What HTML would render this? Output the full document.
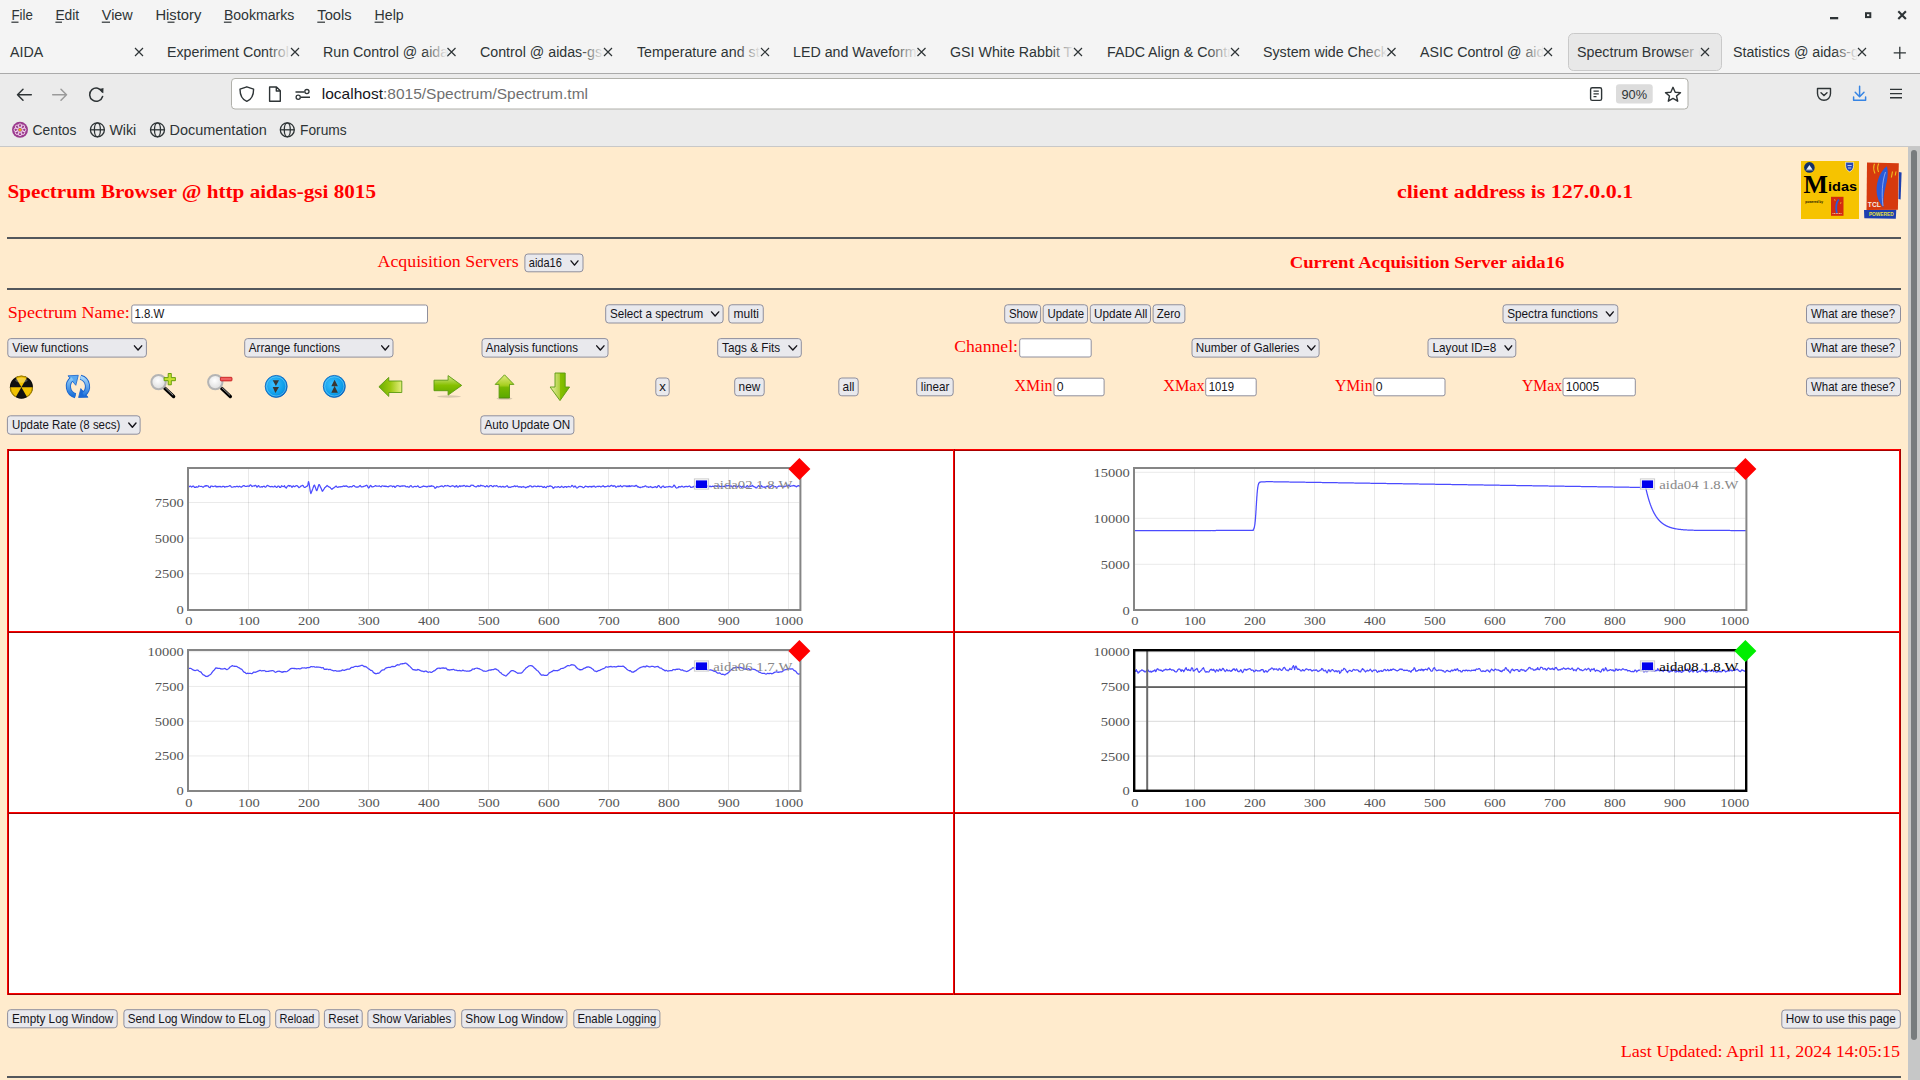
<!DOCTYPE html>
<html><head><meta charset="utf-8"><title>Spectrum Browser</title>
<style>html,body{margin:0;padding:0;width:1920px;height:1080px;overflow:hidden;background:#ffebcd;font-family:"Liberation Sans",sans-serif}svg{display:block}</style>
</head><body>
<svg width="1920" height="1080" viewBox="0 0 1920 1080">
<rect x="0.00" y="0.00" width="1920.00" height="73.00" fill="#f4f4f4"/>
<rect x="0.00" y="73.00" width="1920.00" height="1.00" fill="#aaaaaa"/>
<rect x="0.00" y="74.00" width="1920.00" height="72.00" fill="#ebebeb"/>
<rect x="0.00" y="146.00" width="1920.00" height="1.00" fill="#c8c8c8"/>
<text x="11.40" y="20.10" font-family="Liberation Sans" font-size="15.5" fill="#2e3436" textLength="21.40" lengthAdjust="spacingAndGlyphs">File</text>
<text x="55.40" y="20.10" font-family="Liberation Sans" font-size="15.5" fill="#2e3436" textLength="23.80" lengthAdjust="spacingAndGlyphs">Edit</text>
<text x="101.80" y="20.10" font-family="Liberation Sans" font-size="15.5" fill="#2e3436" textLength="31.00" lengthAdjust="spacingAndGlyphs">View</text>
<text x="155.40" y="20.10" font-family="Liberation Sans" font-size="15.5" fill="#2e3436" textLength="45.90" lengthAdjust="spacingAndGlyphs">History</text>
<text x="223.90" y="20.10" font-family="Liberation Sans" font-size="15.5" fill="#2e3436" textLength="70.40" lengthAdjust="spacingAndGlyphs">Bookmarks</text>
<text x="317.30" y="20.10" font-family="Liberation Sans" font-size="15.5" fill="#2e3436" textLength="34.30" lengthAdjust="spacingAndGlyphs">Tools</text>
<text x="374.60" y="20.10" font-family="Liberation Sans" font-size="15.5" fill="#2e3436" textLength="29.10" lengthAdjust="spacingAndGlyphs">Help</text>
<rect x="11.40" y="21.60" width="7.10" height="1.20" fill="#2e3436"/>
<rect x="55.40" y="21.60" width="6.60" height="1.20" fill="#2e3436"/>
<rect x="101.80" y="21.60" width="8.20" height="1.20" fill="#2e3436"/>
<rect x="167.50" y="21.60" width="7.00" height="1.20" fill="#2e3436"/>
<rect x="223.90" y="21.60" width="7.60" height="1.20" fill="#2e3436"/>
<rect x="317.30" y="21.60" width="7.70" height="1.20" fill="#2e3436"/>
<rect x="374.60" y="21.60" width="8.90" height="1.20" fill="#2e3436"/>
<rect x="1830.00" y="17.00" width="8.20" height="2.30" fill="#2e3436"/>
<rect x="1866" y="13.2" width="4.3" height="3.9" fill="none" stroke="#2e3436" stroke-width="2"/>
<path d="M1898.3 11.3 L1905.9 18.9 M1905.9 11.3 L1898.3 18.9" stroke="#2e3436" stroke-width="2.1"/>
<rect x="1568.5" y="33.5" width="153" height="37" rx="5" fill="#e8e8e8" stroke="#c9c9c9" stroke-width="1"/>
<defs><linearGradient id="fd" x1="0" x2="1" y1="0" y2="0"><stop offset="0" stop-color="#f4f4f4" stop-opacity="0"/><stop offset="1" stop-color="#f4f4f4" stop-opacity="1"/></linearGradient><linearGradient id="fds" x1="0" x2="1" y1="0" y2="0"><stop offset="0" stop-color="#e8e8e8" stop-opacity="0"/><stop offset="1" stop-color="#e8e8e8" stop-opacity="1"/></linearGradient><clipPath id="cpall"><rect x="0" y="0" width="1920" height="1080"/></clipPath></defs>
<clipPath id="tc0"><rect x="8" y="34" width="127" height="36"/></clipPath>
<g clip-path="url(#tc0)"><text x="10" y="57" font-family="Liberation Sans" font-size="15" fill="#2e3436" transform="translate(10 0) scale(0.95 1) translate(-10 0)">AIDA</text></g>
<path d="M135 48 L143 56 M143 48 L135 56" stroke="#2e3436" stroke-width="1.2"/>
<clipPath id="tc1"><rect x="165" y="34" width="126" height="36"/></clipPath>
<g clip-path="url(#tc1)"><text x="167" y="57" font-family="Liberation Sans" font-size="15" fill="#2e3436" transform="translate(167 0) scale(0.95 1) translate(-167 0)">Experiment Control @ aidas-gsi</text></g>
<rect x="267" y="40" width="24" height="24" fill="url(#fd)"/>
<path d="M291 48 L299 56 M299 48 L291 56" stroke="#2e3436" stroke-width="1.2"/>
<clipPath id="tc2"><rect x="321" y="34" width="126.5" height="36"/></clipPath>
<g clip-path="url(#tc2)"><text x="323" y="57" font-family="Liberation Sans" font-size="15" fill="#2e3436" transform="translate(323 0) scale(0.95 1) translate(-323 0)">Run Control @ aidas-gsi</text></g>
<rect x="423.5" y="40" width="24" height="24" fill="url(#fd)"/>
<path d="M447.5 48 L455.5 56 M455.5 48 L447.5 56" stroke="#2e3436" stroke-width="1.2"/>
<clipPath id="tc3"><rect x="478" y="34" width="126" height="36"/></clipPath>
<g clip-path="url(#tc3)"><text x="480" y="57" font-family="Liberation Sans" font-size="15" fill="#2e3436" transform="translate(480 0) scale(0.95 1) translate(-480 0)">Control @ aidas-gsi</text></g>
<rect x="580" y="40" width="24" height="24" fill="url(#fd)"/>
<path d="M604 48 L612 56 M612 48 L604 56" stroke="#2e3436" stroke-width="1.2"/>
<clipPath id="tc4"><rect x="635" y="34" width="126" height="36"/></clipPath>
<g clip-path="url(#tc4)"><text x="637" y="57" font-family="Liberation Sans" font-size="15" fill="#2e3436" transform="translate(637 0) scale(0.95 1) translate(-637 0)">Temperature and status</text></g>
<rect x="737" y="40" width="24" height="24" fill="url(#fd)"/>
<path d="M761 48 L769 56 M769 48 L761 56" stroke="#2e3436" stroke-width="1.2"/>
<clipPath id="tc5"><rect x="791" y="34" width="126.5" height="36"/></clipPath>
<g clip-path="url(#tc5)"><text x="793" y="57" font-family="Liberation Sans" font-size="15" fill="#2e3436" transform="translate(793 0) scale(0.95 1) translate(-793 0)">LED and Waveforms</text></g>
<rect x="893.5" y="40" width="24" height="24" fill="url(#fd)"/>
<path d="M917.5 48 L925.5 56 M925.5 48 L917.5 56" stroke="#2e3436" stroke-width="1.2"/>
<clipPath id="tc6"><rect x="948" y="34" width="126" height="36"/></clipPath>
<g clip-path="url(#tc6)"><text x="950" y="57" font-family="Liberation Sans" font-size="15" fill="#2e3436" transform="translate(950 0) scale(0.95 1) translate(-950 0)">GSI White Rabbit Timing</text></g>
<rect x="1050" y="40" width="24" height="24" fill="url(#fd)"/>
<path d="M1074 48 L1082 56 M1082 48 L1074 56" stroke="#2e3436" stroke-width="1.2"/>
<clipPath id="tc7"><rect x="1105" y="34" width="126" height="36"/></clipPath>
<g clip-path="url(#tc7)"><text x="1107" y="57" font-family="Liberation Sans" font-size="15" fill="#2e3436" transform="translate(1107 0) scale(0.95 1) translate(-1107 0)">FADC Align &amp; Control</text></g>
<rect x="1207" y="40" width="24" height="24" fill="url(#fd)"/>
<path d="M1231 48 L1239 56 M1239 48 L1231 56" stroke="#2e3436" stroke-width="1.2"/>
<clipPath id="tc8"><rect x="1261" y="34" width="126.5" height="36"/></clipPath>
<g clip-path="url(#tc8)"><text x="1263" y="57" font-family="Liberation Sans" font-size="15" fill="#2e3436" transform="translate(1263 0) scale(0.95 1) translate(-1263 0)">System wide Checks</text></g>
<rect x="1363.5" y="40" width="24" height="24" fill="url(#fd)"/>
<path d="M1387.5 48 L1395.5 56 M1395.5 48 L1387.5 56" stroke="#2e3436" stroke-width="1.2"/>
<clipPath id="tc9"><rect x="1418" y="34" width="126" height="36"/></clipPath>
<g clip-path="url(#tc9)"><text x="1420" y="57" font-family="Liberation Sans" font-size="15" fill="#2e3436" transform="translate(1420 0) scale(0.95 1) translate(-1420 0)">ASIC Control @ aidas-gsi</text></g>
<rect x="1520" y="40" width="24" height="24" fill="url(#fd)"/>
<path d="M1544 48 L1552 56 M1552 48 L1544 56" stroke="#2e3436" stroke-width="1.2"/>
<clipPath id="tc10"><rect x="1575" y="34" width="126" height="36"/></clipPath>
<g clip-path="url(#tc10)"><text x="1577" y="57" font-family="Liberation Sans" font-size="15" fill="#2e3436" transform="translate(1577 0) scale(0.95 1) translate(-1577 0)">Spectrum Browser @ http aidas-gsi 8015</text></g>
<rect x="1677" y="40" width="24" height="24" fill="url(#fds)"/>
<path d="M1701 48 L1709 56 M1709 48 L1701 56" stroke="#2e3436" stroke-width="1.2"/>
<clipPath id="tc11"><rect x="1731" y="34" width="127" height="36"/></clipPath>
<g clip-path="url(#tc11)"><text x="1733" y="57" font-family="Liberation Sans" font-size="15" fill="#2e3436" transform="translate(1733 0) scale(0.95 1) translate(-1733 0)">Statistics @ aidas-gsi</text></g>
<rect x="1834" y="40" width="24" height="24" fill="url(#fd)"/>
<path d="M1858 48 L1866 56 M1866 48 L1858 56" stroke="#2e3436" stroke-width="1.2"/>
<path d="M1899.8 46.8 V58.9 M1893.7 52.8 H1905.9" stroke="#2e3436" stroke-width="1.3"/>
<path d="M31.3 94.7 H17.5 M23 89.2 L17.5 94.7 L23 100.2" fill="none" stroke="#2e3436" stroke-width="1.5" stroke-linecap="round" stroke-linejoin="round"/>
<path d="M52.7 94.7 H66.5 M61 89.2 L66.5 94.7 L61 100.2" fill="none" stroke="#9a9a9a" stroke-width="1.5" stroke-linecap="round" stroke-linejoin="round"/>
<path d="M102.3 92 A6.6 6.6 0 1 0 102.6 96.5" fill="none" stroke="#2e3436" stroke-width="1.5" stroke-linecap="round"/>
<path d="M98.5 89.2 L103.5 88 L103.3 93.2 Z" fill="#2e3436"/>
<rect x="231.5" y="78.5" width="1456.5" height="30.5" rx="3.5" fill="#ffffff" stroke="#b0b0aa" stroke-width="1"/>
<path d="M246.8 86.8 L253.6 89.2 C253.6 96 251 99.6 246.8 101.4 C242.6 99.6 240 96 240 89.2 Z" fill="none" stroke="#2e3436" stroke-width="1.4" stroke-linejoin="round"/>
<path d="M269.6 87 H276.5 L280.3 90.8 V101.2 H269.6 Z M276.3 87 V91 H280.3" fill="none" stroke="#2e3436" stroke-width="1.4" stroke-linejoin="round"/>
<path d="M295.5 92 H304.2 M301 97.3 H310" stroke="#2e3436" stroke-width="1.4"/><circle cx="306.9" cy="91.6" r="2.1" fill="#fff" stroke="#2e3436" stroke-width="1.3"/><circle cx="298.2" cy="97.2" r="2.1" fill="#fff" stroke="#2e3436" stroke-width="1.3"/>
<text x="321.8" y="99" font-family="Liberation Sans" font-size="15" textLength="266.2" lengthAdjust="spacingAndGlyphs"><tspan fill="#15141a">localhost</tspan><tspan fill="#6f6f6f">:8015/Spectrum/Spectrum.tml</tspan></text>
<rect x="1590.6" y="87.8" width="11" height="12.6" rx="1.6" fill="none" stroke="#2e3436" stroke-width="1.4"/><path d="M1593.5 91.2 H1598.8 M1593.5 93.9 H1598.8 M1593.5 96.6 H1596.5" stroke="#2e3436" stroke-width="1.2"/>
<rect x="1616.00" y="84.20" width="36.70" height="19.40" fill="#dcdcdc" rx="3"/>
<text x="1621.50" y="98.80" font-family="Liberation Sans" font-size="13" fill="#2e3436" textLength="25.60" lengthAdjust="spacingAndGlyphs">90%</text>
<path d="M1673 87.3 L1675.2 92.2 L1680.5 92.6 L1676.5 96 L1677.7 101.2 L1673 98.4 L1668.3 101.2 L1669.5 96 L1665.5 92.6 L1670.8 92.2 Z" fill="none" stroke="#2e3436" stroke-width="1.4" stroke-linejoin="round"/>
<path d="M1817.5 88.5 H1830.5 V93.5 C1830.5 97.5 1827.6 100.3 1824 100.3 C1820.4 100.3 1817.5 97.5 1817.5 93.5 Z" fill="none" stroke="#2e3436" stroke-width="1.4" stroke-linejoin="round"/><path d="M1821 92.8 L1824 95.6 L1827 92.8" fill="none" stroke="#2e3436" stroke-width="1.4" stroke-linecap="round"/>
<path d="M1859.6 86.3 V96.5 M1855.2 92.3 L1859.6 96.7 L1864 92.3 M1853.6 97 V100.3 H1865.6 V97" fill="none" stroke="#3584e4" stroke-width="1.5" stroke-linecap="round" stroke-linejoin="round"/>
<path d="M1890 89.4 H1902 M1890 93.6 H1902 M1890 97.8 H1902" stroke="#2e3436" stroke-width="1.4"/>
<circle cx="20" cy="129.8" r="8" fill="#9b3b8e"/>
<circle cx="24.00" cy="129.80" r="1.9" fill="none" stroke="#f3d9ee" stroke-width="0.9"/>
<circle cx="22.83" cy="132.63" r="1.9" fill="none" stroke="#f3d9ee" stroke-width="0.9"/>
<circle cx="20.00" cy="133.80" r="1.9" fill="none" stroke="#f3d9ee" stroke-width="0.9"/>
<circle cx="17.17" cy="132.63" r="1.9" fill="none" stroke="#f3d9ee" stroke-width="0.9"/>
<circle cx="16.00" cy="129.80" r="1.9" fill="none" stroke="#f3d9ee" stroke-width="0.9"/>
<circle cx="17.17" cy="126.97" r="1.9" fill="none" stroke="#f3d9ee" stroke-width="0.9"/>
<circle cx="20.00" cy="125.80" r="1.9" fill="none" stroke="#f3d9ee" stroke-width="0.9"/>
<circle cx="22.83" cy="126.97" r="1.9" fill="none" stroke="#f3d9ee" stroke-width="0.9"/>
<circle cx="20" cy="129.8" r="1.4" fill="#f0b400"/>
<text x="32.40" y="135.00" font-family="Liberation Sans" font-size="15.5" fill="#2e3436" textLength="44.10" lengthAdjust="spacingAndGlyphs">Centos</text>
<g fill="none" stroke="#2e3436" stroke-width="1.3"><circle cx="97.4" cy="129.8" r="7"/><ellipse cx="97.4" cy="129.8" rx="3" ry="7"/><path d="M90.4 129.8 H104.4"/></g>
<text x="109.40" y="135.00" font-family="Liberation Sans" font-size="15.5" fill="#2e3436" textLength="26.90" lengthAdjust="spacingAndGlyphs">Wiki</text>
<g fill="none" stroke="#2e3436" stroke-width="1.3"><circle cx="157.5" cy="129.8" r="7"/><ellipse cx="157.5" cy="129.8" rx="3" ry="7"/><path d="M150.5 129.8 H164.5"/></g>
<text x="169.60" y="135.00" font-family="Liberation Sans" font-size="15.5" fill="#2e3436" textLength="97.10" lengthAdjust="spacingAndGlyphs">Documentation</text>
<g fill="none" stroke="#2e3436" stroke-width="1.3"><circle cx="287.3" cy="129.8" r="7"/><ellipse cx="287.3" cy="129.8" rx="3" ry="7"/><path d="M280.3 129.8 H294.3"/></g>
<text x="300.00" y="135.00" font-family="Liberation Sans" font-size="15.5" fill="#2e3436" textLength="46.70" lengthAdjust="spacingAndGlyphs">Forums</text>
<rect x="0.00" y="147.00" width="1908.00" height="933.00" fill="#ffebcd"/>
<rect x="1908.00" y="147.00" width="12.00" height="933.00" fill="#c6c7c7"/>
<rect x="1911" y="150" width="6" height="890" rx="3" fill="#787c7e"/>
<text x="7.50" y="198.00" font-family="Liberation Serif" font-size="19" fill="#ff0000" font-weight="700" textLength="368.50" lengthAdjust="spacingAndGlyphs">Spectrum Browser @ http aidas-gsi 8015</text>
<text x="1397.00" y="197.80" font-family="Liberation Serif" font-size="18.5" fill="#ff0000" font-weight="700" textLength="236.20" lengthAdjust="spacingAndGlyphs">client address is 127.0.0.1</text>
<rect x="1801.00" y="161.00" width="58.00" height="58.00" fill="#f6c300"/>
<circle cx="1809.4" cy="167.4" r="5.3" fill="#13306a"/><path d="M1806.2 169.8 L1809.4 165 L1812.6 169.8 Z" fill="#e8eef8"/><path d="M1805.5 170.5 H1813.3" stroke="#8090b0" stroke-width="0.6"/>
<path d="M1845.6 162.2 H1853.6 V165.8 C1853.6 168.9 1851.6 170.9 1849.6 171.8 C1847.6 170.9 1845.6 168.9 1845.6 165.8 Z" fill="#2648b8" stroke="#fffbe0" stroke-width="0.7"/><path d="M1847.5 165.5 H1851.7 M1848 168 H1851.2" stroke="#ffffff" stroke-width="0.7"/>
<text x="1803.6" y="193.4" font-family="Liberation Serif" font-size="26" font-weight="700" fill="#000" textLength="24.4" lengthAdjust="spacingAndGlyphs">M</text>
<text x="1828" y="190.8" font-family="Liberation Sans" font-size="13.5" font-weight="700" fill="#000" textLength="29" lengthAdjust="spacingAndGlyphs">idas</text>
<text x="1805.3" y="202.8" font-family="Liberation Sans" font-size="3.6" font-weight="700" fill="#1a1400" textLength="17.8" lengthAdjust="spacingAndGlyphs">powered by</text>
<rect x="1831.00" y="196.80" width="12.50" height="19.00" fill="#d42a10"/>
<path d="M1838.8 199.5 C1836 202.5 1835.6 207 1836.8 213" stroke="#2a5ad8" stroke-width="1.8" fill="none"/><path d="M1834.5 199 L1835.2 201 M1841 202 L1840.5 204" stroke="#f0d040" stroke-width="0.6"/>
<path d="M1832.5 213.5 H1842" stroke="#f0e0c0" stroke-width="0.8" stroke-dasharray="1 0.6"/>
<path d="M1864 210 L1896.3 209.5 L1895.8 218.8 L1864.3 218.2 Z" fill="#1d3fb0"/>
<path d="M1867 162.5 L1898.8 163.3 L1897.9 209.8 L1866.5 210 Z" fill="#d63a0e"/>
<path d="M1899 172 L1901.6 172.5 L1900.6 199.5 L1898.5 199 Z" fill="#1d3fb0"/>
<path d="M1886.8 166.3 C1880.5 171 1876.2 181 1876.6 191 C1876.9 198 1879.8 203.5 1883.4 207.5 C1883 200 1884 192 1885.8 186 C1887.6 180 1888.6 172 1886.8 166.3 Z" fill="#2a5ad8"/>
<path d="M1885.5 172 C1882 182 1881.5 195 1883 206" stroke="#c8d8ff" stroke-width="0.6" fill="none"/>
<path d="M1874.5 163.8 C1873.2 167 1873.6 170.5 1875 173.5 M1878.8 163.6 C1877.2 166.5 1877.5 169.5 1878.6 172 M1892.5 171.5 L1891.4 177.5 M1896 171.5 L1895.2 175.5" stroke="#f0c020" stroke-width="1.1" fill="none"/>
<text x="1867.8" y="207" font-family="Liberation Sans" font-size="6.5" font-weight="700" fill="#f4ece4" textLength="13" lengthAdjust="spacingAndGlyphs">TCL</text>
<text x="1868.9" y="216.2" font-family="Liberation Sans" font-size="6" font-weight="700" fill="#e8e040" textLength="24.8" lengthAdjust="spacingAndGlyphs">POWERED</text>
<rect x="7.00" y="237.00" width="1894.00" height="2.00" fill="#53575c"/>
<rect x="7.00" y="288.00" width="1894.00" height="2.00" fill="#53575c"/>
<text x="377.50" y="267.00" font-family="Liberation Serif" font-size="16.5" fill="#ff0000" textLength="141.25" lengthAdjust="spacingAndGlyphs">Acquisition Servers</text>
<rect x="524.90" y="254.00" width="58.10" height="17.80" rx="3" fill="#e9e9ed" stroke="#8f8f9d" stroke-width="1"/>
<text x="528.75" y="266.60" font-family="Liberation Sans" font-size="13" fill="#15141a" textLength="33.15" lengthAdjust="spacingAndGlyphs">aida16</text>
<path d="M571.00 260.90 L574.50 265.10 L578.00 260.90" fill="none" stroke="#15141a" stroke-width="1.4" stroke-linecap="round" stroke-linejoin="round"/>
<text x="1289.70" y="268.10" font-family="Liberation Serif" font-size="16.5" fill="#ff0000" font-weight="700" textLength="274.70" lengthAdjust="spacingAndGlyphs">Current Acquisition Server aida16</text>
<text x="7.80" y="317.80" font-family="Liberation Serif" font-size="16" fill="#ff0000" textLength="121.90" lengthAdjust="spacingAndGlyphs">Spectrum Name:</text>
<rect x="131.75" y="305.00" width="295.75" height="18.00" rx="2" fill="#fff" stroke="#8f8f9d" stroke-width="1"/>
<text x="134.40" y="317.80" font-family="Liberation Sans" font-size="13" fill="#15141a" textLength="30.00" lengthAdjust="spacingAndGlyphs">1.8.W</text>
<rect x="605.70" y="304.75" width="117.40" height="18.25" rx="3" fill="#e9e9ed" stroke="#8f8f9d" stroke-width="1"/>
<text x="609.90" y="317.80" font-family="Liberation Sans" font-size="13" fill="#15141a" textLength="93.20" lengthAdjust="spacingAndGlyphs">Select a spectrum</text>
<path d="M711.50 311.88 L715.12 316.07 L718.75 311.88" fill="none" stroke="#15141a" stroke-width="1.4" stroke-linecap="round" stroke-linejoin="round"/>
<rect x="728.80" y="304.75" width="34.45" height="18.25" rx="3" fill="#e9e9ed" stroke="#8f8f9d" stroke-width="1"/>
<text x="733.60" y="317.80" font-family="Liberation Sans" font-size="13" fill="#15141a" textLength="25.30" lengthAdjust="spacingAndGlyphs">multi</text>
<rect x="1004.70" y="304.75" width="35.90" height="18.25" rx="3" fill="#e9e9ed" stroke="#8f8f9d" stroke-width="1"/>
<text x="1008.90" y="317.80" font-family="Liberation Sans" font-size="13" fill="#15141a" textLength="28.60" lengthAdjust="spacingAndGlyphs">Show</text>
<rect x="1043.20" y="304.75" width="44.30" height="18.25" rx="3" fill="#e9e9ed" stroke="#8f8f9d" stroke-width="1"/>
<text x="1047.40" y="317.80" font-family="Liberation Sans" font-size="13" fill="#15141a" textLength="36.80" lengthAdjust="spacingAndGlyphs">Update</text>
<rect x="1090.30" y="304.75" width="60.20" height="18.25" rx="3" fill="#e9e9ed" stroke="#8f8f9d" stroke-width="1"/>
<text x="1094.00" y="317.80" font-family="Liberation Sans" font-size="13" fill="#15141a" textLength="53.40" lengthAdjust="spacingAndGlyphs">Update All</text>
<rect x="1153.10" y="304.75" width="31.80" height="18.25" rx="3" fill="#e9e9ed" stroke="#8f8f9d" stroke-width="1"/>
<text x="1156.80" y="317.80" font-family="Liberation Sans" font-size="13" fill="#15141a" textLength="23.70" lengthAdjust="spacingAndGlyphs">Zero</text>
<rect x="1503.00" y="304.75" width="114.80" height="18.25" rx="3" fill="#e9e9ed" stroke="#8f8f9d" stroke-width="1"/>
<text x="1507.20" y="317.80" font-family="Liberation Sans" font-size="13" fill="#15141a" textLength="90.80" lengthAdjust="spacingAndGlyphs">Spectra functions</text>
<path d="M1606.30 311.88 L1609.80 316.07 L1613.30 311.88" fill="none" stroke="#15141a" stroke-width="1.4" stroke-linecap="round" stroke-linejoin="round"/>
<rect x="1806.50" y="304.75" width="94.00" height="18.25" rx="3" fill="#e9e9ed" stroke="#8f8f9d" stroke-width="1"/>
<text x="1811.00" y="317.80" font-family="Liberation Sans" font-size="13" fill="#15141a" textLength="84.00" lengthAdjust="spacingAndGlyphs">What are these?</text>
<rect x="7.80" y="338.60" width="138.60" height="18.50" rx="3" fill="#e9e9ed" stroke="#8f8f9d" stroke-width="1"/>
<text x="12.30" y="351.60" font-family="Liberation Sans" font-size="13" fill="#15141a" textLength="76.00" lengthAdjust="spacingAndGlyphs">View functions</text>
<path d="M134.40 345.85 L138.05 350.05 L141.70 345.85" fill="none" stroke="#15141a" stroke-width="1.4" stroke-linecap="round" stroke-linejoin="round"/>
<rect x="244.70" y="338.60" width="148.30" height="18.50" rx="3" fill="#e9e9ed" stroke="#8f8f9d" stroke-width="1"/>
<text x="248.75" y="351.60" font-family="Liberation Sans" font-size="13" fill="#15141a" textLength="91.25" lengthAdjust="spacingAndGlyphs">Arrange functions</text>
<path d="M381.70 345.85 L385.23 350.05 L388.75 345.85" fill="none" stroke="#15141a" stroke-width="1.4" stroke-linecap="round" stroke-linejoin="round"/>
<rect x="482.00" y="338.60" width="126.00" height="18.50" rx="3" fill="#e9e9ed" stroke="#8f8f9d" stroke-width="1"/>
<text x="485.80" y="351.60" font-family="Liberation Sans" font-size="13" fill="#15141a" textLength="92.10" lengthAdjust="spacingAndGlyphs">Analysis functions</text>
<path d="M596.70 345.85 L600.35 350.05 L604.00 345.85" fill="none" stroke="#15141a" stroke-width="1.4" stroke-linecap="round" stroke-linejoin="round"/>
<rect x="717.70" y="338.60" width="83.60" height="18.50" rx="3" fill="#e9e9ed" stroke="#8f8f9d" stroke-width="1"/>
<text x="722.00" y="351.60" font-family="Liberation Sans" font-size="13" fill="#15141a" textLength="58.20" lengthAdjust="spacingAndGlyphs">Tags &amp; Fits</text>
<path d="M789.00 345.85 L792.85 350.05 L796.70 345.85" fill="none" stroke="#15141a" stroke-width="1.4" stroke-linecap="round" stroke-linejoin="round"/>
<text x="954.20" y="351.90" font-family="Liberation Serif" font-size="16.5" fill="#ff0000" textLength="63.80" lengthAdjust="spacingAndGlyphs">Channel:</text>
<rect x="1019.70" y="338.80" width="71.50" height="18.20" rx="2" fill="#fff" stroke="#8f8f9d" stroke-width="1"/>
<rect x="1192.00" y="338.60" width="127.10" height="18.50" rx="3" fill="#e9e9ed" stroke="#8f8f9d" stroke-width="1"/>
<text x="1195.80" y="351.60" font-family="Liberation Sans" font-size="13" fill="#15141a" textLength="103.60" lengthAdjust="spacingAndGlyphs">Number of Galleries</text>
<path d="M1307.70 345.85 L1311.35 350.05 L1315.00 345.85" fill="none" stroke="#15141a" stroke-width="1.4" stroke-linecap="round" stroke-linejoin="round"/>
<rect x="1428.00" y="338.60" width="87.80" height="18.50" rx="3" fill="#e9e9ed" stroke="#8f8f9d" stroke-width="1"/>
<text x="1432.50" y="351.60" font-family="Liberation Sans" font-size="13" fill="#15141a" textLength="63.70" lengthAdjust="spacingAndGlyphs">Layout ID=8</text>
<path d="M1505.00 345.85 L1508.35 350.05 L1511.70 345.85" fill="none" stroke="#15141a" stroke-width="1.4" stroke-linecap="round" stroke-linejoin="round"/>
<rect x="1806.50" y="338.60" width="94.00" height="18.50" rx="3" fill="#e9e9ed" stroke="#8f8f9d" stroke-width="1"/>
<text x="1811.00" y="351.60" font-family="Liberation Sans" font-size="13" fill="#15141a" textLength="84.00" lengthAdjust="spacingAndGlyphs">What are these?</text>
<rect x="655.80" y="378.00" width="13.40" height="17.80" rx="3" fill="#e9e9ed" stroke="#8f8f9d" stroke-width="1"/>
<text x="659.20" y="390.80" font-family="Liberation Sans" font-size="13" fill="#15141a" textLength="6.60" lengthAdjust="spacingAndGlyphs">x</text>
<rect x="734.70" y="378.00" width="29.50" height="17.80" rx="3" fill="#e9e9ed" stroke="#8f8f9d" stroke-width="1"/>
<text x="738.60" y="390.80" font-family="Liberation Sans" font-size="13" fill="#15141a" textLength="21.70" lengthAdjust="spacingAndGlyphs">new</text>
<rect x="838.80" y="378.00" width="19.40" height="17.80" rx="3" fill="#e9e9ed" stroke="#8f8f9d" stroke-width="1"/>
<text x="842.60" y="390.80" font-family="Liberation Sans" font-size="13" fill="#15141a" textLength="11.90" lengthAdjust="spacingAndGlyphs">all</text>
<rect x="916.70" y="378.00" width="36.50" height="17.80" rx="3" fill="#e9e9ed" stroke="#8f8f9d" stroke-width="1"/>
<text x="920.80" y="390.80" font-family="Liberation Sans" font-size="13" fill="#15141a" textLength="28.50" lengthAdjust="spacingAndGlyphs">linear</text>
<text x="1014.60" y="390.80" font-family="Liberation Serif" font-size="16.5" fill="#ff0000" textLength="37.90" lengthAdjust="spacingAndGlyphs">XMin</text>
<rect x="1054.00" y="378.20" width="50.10" height="17.60" rx="2" fill="#fff" stroke="#8f8f9d" stroke-width="1"/>
<text x="1056.70" y="390.80" font-family="Liberation Sans" font-size="13" fill="#15141a" textLength="6.80" lengthAdjust="spacingAndGlyphs">0</text>
<text x="1163.30" y="390.80" font-family="Liberation Serif" font-size="16.5" fill="#ff0000" textLength="41.30" lengthAdjust="spacingAndGlyphs">XMax</text>
<rect x="1205.70" y="378.20" width="50.50" height="17.60" rx="2" fill="#fff" stroke="#8f8f9d" stroke-width="1"/>
<text x="1208.75" y="390.80" font-family="Liberation Sans" font-size="13" fill="#15141a" textLength="25.25" lengthAdjust="spacingAndGlyphs">1019</text>
<text x="1335.00" y="390.80" font-family="Liberation Serif" font-size="16.5" fill="#ff0000" textLength="37.50" lengthAdjust="spacingAndGlyphs">YMin</text>
<rect x="1373.80" y="378.20" width="71.20" height="17.60" rx="2" fill="#fff" stroke="#8f8f9d" stroke-width="1"/>
<text x="1375.80" y="390.80" font-family="Liberation Sans" font-size="13" fill="#15141a" textLength="6.80" lengthAdjust="spacingAndGlyphs">0</text>
<text x="1522.00" y="390.80" font-family="Liberation Serif" font-size="16.5" fill="#ff0000" textLength="40.00" lengthAdjust="spacingAndGlyphs">YMax</text>
<rect x="1563.00" y="378.20" width="72.30" height="17.60" rx="2" fill="#fff" stroke="#8f8f9d" stroke-width="1"/>
<text x="1565.80" y="390.80" font-family="Liberation Sans" font-size="13" fill="#15141a" textLength="33.40" lengthAdjust="spacingAndGlyphs">10005</text>
<rect x="1806.50" y="378.00" width="94.00" height="17.80" rx="3" fill="#e9e9ed" stroke="#8f8f9d" stroke-width="1"/>
<text x="1811.00" y="390.80" font-family="Liberation Sans" font-size="13" fill="#15141a" textLength="84.00" lengthAdjust="spacingAndGlyphs">What are these?</text>
<rect x="7.40" y="415.80" width="132.70" height="18.40" rx="3" fill="#e9e9ed" stroke="#8f8f9d" stroke-width="1"/>
<text x="11.90" y="428.90" font-family="Liberation Sans" font-size="13" fill="#15141a" textLength="108.40" lengthAdjust="spacingAndGlyphs">Update Rate (8 secs)</text>
<path d="M128.75 423.00 L132.38 427.20 L136.00 423.00" fill="none" stroke="#15141a" stroke-width="1.4" stroke-linecap="round" stroke-linejoin="round"/>
<rect x="480.80" y="415.80" width="93.10" height="18.40" rx="3" fill="#e9e9ed" stroke="#8f8f9d" stroke-width="1"/>
<text x="484.40" y="428.90" font-family="Liberation Sans" font-size="13" fill="#15141a" textLength="85.90" lengthAdjust="spacingAndGlyphs">Auto Update ON</text>
<defs>
<radialGradient id="gBlue" cx="0.4" cy="0.4" r="0.7"><stop offset="0" stop-color="#3cc0ff"/><stop offset="0.7" stop-color="#0a9be8"/><stop offset="1" stop-color="#0a62c0"/></radialGradient>
<linearGradient id="gArrL" x1="0" x2="1" y1="0" y2="0"><stop offset="0" stop-color="#6aae00"/><stop offset="0.5" stop-color="#9cc810"/><stop offset="1" stop-color="#e6ee80"/></linearGradient>
<linearGradient id="gArrR" x1="0" x2="0" y1="0" y2="1"><stop offset="0" stop-color="#d8e890"/><stop offset="0.5" stop-color="#86c000"/><stop offset="1" stop-color="#60a800"/></linearGradient>
<linearGradient id="gArrU" x1="0" x2="0" y1="0" y2="1"><stop offset="0" stop-color="#dfea80"/><stop offset="0.45" stop-color="#a8d020"/><stop offset="0.55" stop-color="#78b800"/><stop offset="1" stop-color="#5aa800"/></linearGradient>
<linearGradient id="gArrD" x1="0" x2="1" y1="0" y2="0"><stop offset="0" stop-color="#eef2b0"/><stop offset="0.48" stop-color="#b0d040"/><stop offset="0.52" stop-color="#88c000"/><stop offset="1" stop-color="#6ab000"/></linearGradient>
<linearGradient id="gRef" x1="0" x2="0" y1="0" y2="1"><stop offset="0" stop-color="#8ccaf8"/><stop offset="1" stop-color="#1a70d8"/></linearGradient>
<radialGradient id="gLens" cx="0.45" cy="0.4" r="0.6"><stop offset="0" stop-color="#ffffff"/><stop offset="1" stop-color="#dcdcdc"/></radialGradient>
</defs>
<circle cx="21.4" cy="387.2" r="11.5" fill="#111"/>
<path d="M21.4 387.2 L27.15 377.24 A11.5 11.5 0 0 0 15.65 377.24 Z" fill="#f2c200"/>
<path d="M21.4 387.2 L9.90 387.20 A11.5 11.5 0 0 0 15.65 397.16 Z" fill="#f2c200"/>
<path d="M21.4 387.2 L27.15 397.16 A11.5 11.5 0 0 0 32.90 387.20 Z" fill="#f2c200"/>
<circle cx="21.4" cy="387.2" r="11.0" fill="none" stroke="#000" stroke-opacity="0.35" stroke-width="1"/>
<ellipse cx="21.4" cy="380.2" rx="6" ry="2.5" fill="#fff" fill-opacity="0.25"/>
<g fill="none" stroke-linecap="butt">
<path d="M75.5 395.7 A9.5 9.5 0 0 1 72.5 378.7" stroke="#1c64cc" stroke-width="5.2"/>
<path d="M80.5 377.3 A9.5 9.5 0 0 1 83.4 394.3" stroke="#1c64cc" stroke-width="5.2"/>
</g>
<path d="M68.0 375.8 L78.3 375.3 L75.8 385.3 Z" fill="#5aa8f0" stroke="#1c64cc" stroke-width="0.8" stroke-linejoin="round"/>
<path d="M78.6 397.5 L88.0 397.2 L80.8 388.6 Z" fill="#1a6ad8" stroke="#1c64cc" stroke-width="0.8" stroke-linejoin="round"/>
<g fill="none"><path d="M75.5 395.7 A9.5 9.5 0 0 1 72.5 378.7" stroke="url(#gRef)" stroke-width="3.4"/><path d="M80.5 377.3 A9.5 9.5 0 0 1 83.4 394.3" stroke="url(#gRef2)" stroke-width="3.4"/></g>
<defs><linearGradient id="gRef2" x1="0" x2="0" y1="0" y2="1"><stop offset="0" stop-color="#a8d8fa"/><stop offset="1" stop-color="#2a7ce0"/></linearGradient></defs>
<line x1="164.79999999999998" y1="388.3" x2="173.6" y2="396.5" stroke="#000" stroke-width="3.4" stroke-linecap="round"/>
<line x1="165.2" y1="387.70000000000005" x2="173.2" y2="395.3" stroke="#fff" stroke-width="0.8" stroke-opacity="0.8"/>
<circle cx="158.6" cy="382.1" r="7.2" fill="url(#gLens)" stroke="#b4b4b4" stroke-width="2"/>
<line x1="221.5" y1="388.3" x2="230.3" y2="396.5" stroke="#000" stroke-width="3.4" stroke-linecap="round"/>
<line x1="221.9" y1="387.70000000000005" x2="229.9" y2="395.3" stroke="#fff" stroke-width="0.8" stroke-opacity="0.8"/>
<circle cx="215.3" cy="382.1" r="7.2" fill="url(#gLens)" stroke="#b4b4b4" stroke-width="2"/>
<path d="M168.2 373.5 H171.3 V377.6 H175.4 V380.7 H171.3 V384.8 H168.2 V380.7 H164.1 V377.6 H168.2 Z" fill="#c8e030" stroke="#5a9800" stroke-width="0.9" stroke-linejoin="round"/>
<rect x="220.4" y="377.3" width="11.6" height="3.6" rx="0.8" fill="#f06060" stroke="#c01010" stroke-width="0.8"/>
<circle cx="276.2" cy="386.4" r="11" fill="url(#gBlue)" stroke="#0a5cb8" stroke-width="0.8"/>
<circle cx="276.2" cy="386.4" r="9.6" fill="none" stroke="#a8e4ff" stroke-width="0.6" stroke-opacity="0.7"/>
<path d="M272.7 380.3 H279.0 L275.9 386 Z M272.7 386.9 H279.0 L275.4 393 Z" fill="#3a3632"/>
<circle cx="334.3" cy="386.4" r="11" fill="url(#gBlue)" stroke="#0a5cb8" stroke-width="0.8"/>
<circle cx="334.3" cy="386.4" r="9.6" fill="none" stroke="#a8e4ff" stroke-width="0.6" stroke-opacity="0.7"/>
<path d="M331.3 386.2 H337.90000000000003 L334.6 379.8 Z M331.3 392.7 H337.90000000000003 L334.6 386 Z" fill="#3a3632"/>
<path d="M378.9 386.75 L388.75 377.4 V381 H401.8 V392.5 H388.75 V396.4 Z" fill="url(#gArrL)" stroke="#5a9a10" stroke-width="0.9" stroke-linejoin="round"/>
<path d="M434 380.2 H448.1 V375.6 L461.7 385.4 L448.1 395.1 V390.7 H434 Z" fill="url(#gArrR)" stroke="#5a9a10" stroke-width="0.9" stroke-linejoin="round"/>
<ellipse cx="449" cy="396.5" rx="12" ry="1.2" fill="#000" fill-opacity="0.15"/>
<path d="M504.5 374.8 L513.9 384.4 H509.5 V398 H499.1 V384.4 H495.2 Z" fill="url(#gArrU)" stroke="#5a9a10" stroke-width="0.9" stroke-linejoin="round"/>
<ellipse cx="504.5" cy="398.6" rx="8" ry="1.2" fill="#000" fill-opacity="0.15"/>
<path d="M555 373 H565.2 V387 H569.6 L560 400.6 L550.1 387 H555 Z" fill="url(#gArrD)" stroke="#5a9a10" stroke-width="0.9" stroke-linejoin="round"/>
<rect x="7.00" y="449.00" width="1894.00" height="546.00" fill="#ffffff"/>
<rect x="7.00" y="449.00" width="1894.00" height="1.00" fill="#ff0000"/>
<rect x="7.00" y="450.00" width="1894.00" height="1.00" fill="#a80000"/>
<rect x="7.00" y="631.00" width="1894.00" height="1.00" fill="#ff0000"/>
<rect x="7.00" y="632.00" width="1894.00" height="1.00" fill="#a80000"/>
<rect x="7.00" y="812.00" width="1894.00" height="1.00" fill="#ff0000"/>
<rect x="7.00" y="813.00" width="1894.00" height="1.00" fill="#a80000"/>
<rect x="7.00" y="993.00" width="1894.00" height="1.00" fill="#ff0000"/>
<rect x="7.00" y="994.00" width="1894.00" height="1.00" fill="#a80000"/>
<rect x="7.00" y="449.00" width="1.00" height="546.00" fill="#ff0000"/>
<rect x="8.00" y="449.00" width="1.00" height="546.00" fill="#a80000"/>
<rect x="953.00" y="449.00" width="1.00" height="546.00" fill="#ff0000"/>
<rect x="954.00" y="449.00" width="1.00" height="546.00" fill="#a80000"/>
<rect x="1899.00" y="449.00" width="1.00" height="546.00" fill="#ff0000"/>
<rect x="1900.00" y="449.00" width="1.00" height="546.00" fill="#a80000"/>
<rect x="248.00" y="469" width="1" height="140" fill="#000" fill-opacity="0.085"/>
<rect x="308.00" y="469" width="1" height="140" fill="#000" fill-opacity="0.085"/>
<rect x="368.00" y="469" width="1" height="140" fill="#000" fill-opacity="0.085"/>
<rect x="428.00" y="469" width="1" height="140" fill="#000" fill-opacity="0.085"/>
<rect x="488.00" y="469" width="1" height="140" fill="#000" fill-opacity="0.085"/>
<rect x="548.00" y="469" width="1" height="140" fill="#000" fill-opacity="0.085"/>
<rect x="608.00" y="469" width="1" height="140" fill="#000" fill-opacity="0.085"/>
<rect x="668.00" y="469" width="1" height="140" fill="#000" fill-opacity="0.085"/>
<rect x="728.00" y="469" width="1" height="140" fill="#000" fill-opacity="0.085"/>
<rect x="788.00" y="469" width="1" height="140" fill="#000" fill-opacity="0.085"/>
<rect x="189.0" y="573.26" width="610.4" height="1" fill="#000" fill-opacity="0.085"/>
<rect x="189.0" y="537.62" width="610.4" height="1" fill="#000" fill-opacity="0.085"/>
<rect x="189.0" y="501.99" width="610.4" height="1" fill="#000" fill-opacity="0.085"/>
<polyline points="188.5,486.64 189.1,486.86 189.7,486.35 190.3,486.03 190.9,486.32 191.5,487.05 192.1,486.70 192.7,486.17 193.3,486.05 193.9,486.55 194.5,487.39 195.1,487.47 195.7,487.30 196.3,486.75 196.9,487.22 197.5,487.16 198.1,487.00 198.7,485.88 199.3,485.99 199.9,486.26 200.5,486.49 201.1,486.44 201.7,486.47 202.3,486.77 202.9,487.12 203.5,487.09 204.1,486.34 204.7,486.21 205.3,485.71 205.9,486.19 206.5,485.53 207.1,485.95 207.7,485.76 208.3,486.26 208.9,487.24 209.5,487.45 210.1,487.63 210.7,486.24 211.3,486.16 211.9,486.10 212.5,486.46 213.1,486.65 213.7,486.48 214.3,486.20 214.9,486.25 215.5,485.97 216.1,486.83 216.7,486.50 217.3,486.94 217.9,486.38 218.5,486.81 219.1,486.42 219.7,486.72 220.3,486.39 220.9,486.95 221.5,486.83 222.1,486.91 222.7,486.30 223.3,486.34 223.9,486.44 224.5,487.16 225.1,486.82 225.7,486.84 226.3,486.50 226.9,486.69 227.5,486.58 228.1,486.47 228.7,486.20 229.3,485.82 229.9,485.64 230.5,485.98 231.1,486.72 231.7,487.12 232.3,487.24 232.9,487.01 233.5,486.90 234.1,486.62 234.7,486.60 235.3,486.91 235.9,486.73 236.5,486.28 237.1,486.31 237.7,486.46 238.3,486.94 238.9,486.60 239.5,486.17 240.1,486.59 240.7,486.84 241.3,487.22 241.9,486.70 242.5,486.19 243.1,485.86 243.7,485.59 244.3,485.65 244.9,486.24 245.5,486.48 246.1,486.38 246.7,486.44 247.3,486.00 247.9,486.22 248.5,486.14 249.1,486.28 249.7,485.51 250.3,484.91 250.9,485.07 251.5,485.78 252.1,486.52 252.7,486.16 253.3,486.01 253.9,485.76 254.5,486.02 255.1,485.33 255.7,485.39 256.3,486.15 256.9,487.18 257.5,486.68 258.1,485.89 258.7,485.67 259.3,486.72 259.9,487.05 260.5,487.04 261.1,486.79 261.7,486.60 262.3,487.15 262.9,486.50 263.5,486.41 264.1,486.09 264.7,486.75 265.3,487.11 265.9,487.01 266.5,486.06 267.1,485.68 267.7,485.43 268.3,485.84 268.9,486.25 269.5,486.35 270.1,486.77 270.7,486.63 271.3,486.65 271.9,486.47 272.5,486.59 273.1,486.96 273.7,486.79 274.3,486.61 274.9,485.95 275.5,486.58 276.1,487.10 276.7,487.46 277.3,486.84 277.9,486.03 278.5,486.14 279.1,486.34 279.7,487.37 280.3,487.39 280.9,487.09 281.5,485.70 282.1,486.05 282.7,486.34 283.3,486.58 283.9,486.21 284.5,485.67 285.1,487.19 285.7,487.47 286.3,488.12 286.9,487.02 287.5,486.04 288.1,485.82 288.7,485.40 289.3,486.22 289.9,485.61 290.5,485.80 291.1,485.98 291.7,487.11 292.3,487.02 292.9,486.18 293.5,485.95 294.1,486.55 294.7,486.71 295.3,486.23 295.9,485.76 296.5,485.70 297.1,485.69 297.7,486.27 298.3,486.83 298.9,487.65 299.5,487.24 300.1,486.99 300.7,486.07 301.3,486.05 301.9,485.70 302.5,485.45 303.1,485.70 303.7,486.52 304.3,487.30 304.9,487.49 305.5,487.13 306.1,486.66 306.7,486.29 307.3,486.10 307.9,484.66 308.5,481.51 309.1,483.71 309.7,487.50 310.3,491.38 310.9,493.56 311.5,492.08 312.1,490.43 312.7,488.90 313.3,487.22 313.9,485.45 314.5,485.10 315.1,486.61 315.7,488.20 316.3,490.16 316.9,490.65 317.5,488.99 318.1,487.06 318.7,484.90 319.3,484.57 319.9,485.69 320.5,487.14 321.1,488.29 321.7,489.76 322.3,491.25 322.9,490.72 323.5,489.73 324.1,488.85 324.7,487.74 325.3,487.23 325.9,486.67 326.5,486.17 327.1,485.51 327.7,485.90 328.3,486.55 328.9,486.86 329.5,487.17 330.1,487.40 330.7,488.14 331.3,488.81 331.9,489.33 332.5,488.76 333.1,488.25 333.7,487.91 334.3,487.47 334.9,487.03 335.5,486.47 336.1,486.03 336.7,486.68 337.3,487.23 337.9,487.44 338.5,486.89 339.1,486.75 339.7,486.84 340.3,486.72 340.9,486.76 341.5,486.73 342.1,486.70 342.7,486.41 343.3,486.04 343.9,485.94 344.5,486.45 345.1,486.04 345.7,486.28 346.3,485.83 346.9,486.35 347.5,486.45 348.1,486.97 348.7,487.18 349.3,487.10 349.9,486.57 350.5,486.51 351.1,486.82 351.7,486.87 352.3,486.56 352.9,485.90 353.5,485.68 354.1,485.60 354.7,486.30 355.3,486.73 355.9,487.06 356.5,487.16 357.1,486.85 357.7,487.13 358.3,486.92 358.9,486.64 359.5,485.94 360.1,485.41 360.7,486.13 361.3,486.98 361.9,486.87 362.5,486.90 363.1,486.38 363.7,486.62 364.3,486.13 364.9,486.13 365.5,485.69 366.1,485.54 366.7,485.26 367.3,485.94 367.9,486.85 368.5,488.03 369.1,487.77 369.7,486.61 370.3,485.66 370.9,485.46 371.5,486.56 372.1,486.84 372.7,486.89 373.3,486.57 373.9,486.55 374.5,486.27 375.1,485.82 375.7,485.57 376.3,486.06 376.9,486.25 377.5,486.21 378.1,486.25 378.7,486.03 379.3,485.85 379.9,486.25 380.5,486.52 381.1,486.92 381.7,485.98 382.3,485.82 382.9,485.93 383.5,486.02 384.1,486.39 384.7,486.03 385.3,486.53 385.9,486.16 386.5,486.35 387.1,486.59 387.7,486.51 388.3,486.91 388.9,486.32 389.5,486.16 390.1,485.90 390.7,485.82 391.3,485.99 391.9,486.05 392.5,486.74 393.1,486.32 393.7,486.20 394.3,486.41 394.9,487.30 395.5,487.08 396.1,486.34 396.7,485.90 397.3,485.63 397.9,485.74 398.5,485.78 399.1,486.08 399.7,486.52 400.3,486.52 400.9,486.13 401.5,486.09 402.1,485.85 402.7,486.16 403.3,485.81 403.9,486.03 404.5,485.87 405.1,485.84 405.7,486.61 406.3,486.74 406.9,486.78 407.5,486.46 408.1,486.88 408.7,487.15 409.3,487.08 409.9,486.27 410.5,485.79 411.1,485.58 411.7,486.33 412.3,486.98 412.9,487.09 413.5,486.87 414.1,486.50 414.7,486.30 415.3,486.46 415.9,486.65 416.5,486.62 417.1,486.30 417.7,485.85 418.3,486.29 418.9,486.92 419.5,487.48 420.1,487.41 420.7,487.28 421.3,486.99 421.9,486.93 422.5,486.37 423.1,486.31 423.7,485.89 424.3,486.43 424.9,486.32 425.5,486.51 426.1,486.41 426.7,486.99 427.3,486.79 427.9,486.39 428.5,486.23 429.1,486.13 429.7,486.55 430.3,486.13 430.9,486.43 431.5,485.75 432.1,486.13 432.7,486.01 433.3,486.28 433.9,486.69 434.5,487.05 435.1,488.37 435.7,487.87 436.3,487.55 436.9,486.52 437.5,486.88 438.1,486.97 438.7,487.07 439.3,486.74 439.9,486.47 440.5,486.36 441.1,486.05 441.7,485.95 442.3,486.16 442.9,486.51 443.5,486.90 444.1,486.36 444.7,485.55 445.3,485.67 445.9,485.90 446.5,485.99 447.1,485.82 447.7,485.39 448.3,485.88 448.9,485.94 449.5,486.49 450.1,486.56 450.7,486.56 451.3,486.10 451.9,485.92 452.5,485.71 453.1,485.97 453.7,486.16 454.3,486.49 454.9,487.05 455.5,486.19 456.1,486.12 456.7,485.56 457.3,487.01 457.9,487.17 458.5,486.72 459.1,486.16 459.7,485.71 460.3,486.50 460.9,486.06 461.5,486.18 462.1,485.84 462.7,486.13 463.3,485.98 463.9,485.46 464.5,485.63 465.1,486.10 465.7,486.63 466.3,486.18 466.9,485.94 467.5,486.13 468.1,486.38 468.7,486.31 469.3,486.57 469.9,486.28 470.5,486.12 471.1,485.13 471.7,485.25 472.3,485.20 472.9,485.48 473.5,485.48 474.1,486.25 474.7,486.48 475.3,486.65 475.9,486.78 476.5,486.82 477.1,486.34 477.7,485.80 478.3,485.54 478.9,486.55 479.5,486.06 480.1,486.17 480.7,485.20 481.3,485.61 481.9,485.49 482.5,485.95 483.1,485.81 483.7,485.94 484.3,486.25 484.9,486.65 485.5,486.85 486.1,486.31 486.7,485.71 487.3,485.78 487.9,486.77 488.5,486.96 489.1,486.65 489.7,485.73 490.3,485.55 490.9,485.50 491.5,485.65 492.1,486.42 492.7,486.71 493.3,486.63 493.9,485.72 494.5,485.79 495.1,485.94 495.7,486.07 496.3,485.68 496.9,485.69 497.5,486.37 498.1,486.89 498.7,486.97 499.3,486.57 499.9,486.49 500.5,486.43 501.1,487.19 501.7,486.76 502.3,486.66 502.9,486.39 503.5,486.66 504.1,487.20 504.7,486.82 505.3,486.95 505.9,486.41 506.5,486.02 507.1,485.69 507.7,486.47 508.3,487.08 508.9,487.56 509.5,487.19 510.1,487.17 510.7,487.30 511.3,486.94 511.9,486.71 512.5,486.70 513.1,486.68 513.7,486.35 514.3,485.99 514.9,485.94 515.5,486.53 516.1,486.38 516.7,486.23 517.3,485.95 517.9,486.63 518.5,486.94 519.1,487.09 519.7,486.63 520.3,486.73 520.9,486.97 521.5,487.38 522.1,486.80 522.7,486.93 523.3,486.51 523.9,486.91 524.5,487.22 525.1,487.17 525.7,487.85 526.3,487.42 526.9,487.17 527.5,486.73 528.1,486.66 528.7,486.94 529.3,486.09 529.9,485.77 530.5,485.76 531.1,486.13 531.7,486.78 532.3,486.77 532.9,486.99 533.5,486.35 534.1,486.20 534.7,486.09 535.3,486.21 535.9,486.54 536.5,486.63 537.1,486.58 537.7,486.07 538.3,486.39 538.9,486.20 539.5,486.69 540.1,486.26 540.7,486.34 541.3,486.35 541.9,486.26 542.5,487.17 543.1,487.10 543.7,487.45 544.3,486.49 544.9,486.99 545.5,487.43 546.1,487.75 546.7,486.87 547.3,486.31 547.9,486.42 548.5,486.68 549.1,486.48 549.7,485.95 550.3,485.88 550.9,486.25 551.5,486.42 552.1,486.66 552.7,487.50 553.3,488.24 553.9,487.93 554.5,487.20 555.1,486.70 555.7,486.98 556.3,487.20 556.9,487.08 557.5,487.03 558.1,486.61 558.7,486.68 559.3,487.17 559.9,487.52 560.5,487.16 561.1,486.64 561.7,486.18 562.3,486.83 562.9,487.03 563.5,487.55 564.1,487.29 564.7,486.65 565.3,486.52 565.9,486.61 566.5,487.34 567.1,486.82 567.7,486.78 568.3,486.42 568.9,486.61 569.5,486.69 570.1,487.00 570.7,486.94 571.3,486.32 571.9,485.48 572.5,485.57 573.1,486.42 573.7,487.15 574.3,486.64 574.9,486.04 575.5,486.18 576.1,487.35 576.7,487.95 577.3,487.93 577.9,487.48 578.5,486.80 579.1,486.54 579.7,486.37 580.3,486.44 580.9,486.58 581.5,486.55 582.1,486.87 582.7,487.27 583.3,487.59 583.9,487.60 584.5,487.08 585.1,486.38 585.7,486.20 586.3,486.42 586.9,486.55 587.5,486.94 588.1,486.66 588.7,487.05 589.3,486.55 589.9,486.26 590.5,486.75 591.1,486.47 591.7,487.11 592.3,486.30 592.9,486.71 593.5,486.17 594.1,486.19 594.7,486.37 595.3,487.17 595.9,487.02 596.5,486.73 597.1,486.42 597.7,486.46 598.3,486.66 598.9,486.12 599.5,486.48 600.1,486.38 600.7,486.96 601.3,486.88 601.9,486.38 602.5,486.20 603.1,485.75 603.7,486.33 604.3,486.57 604.9,487.08 605.5,486.68 606.1,486.58 606.7,486.45 607.3,486.24 607.9,485.77 608.5,486.15 609.1,486.43 609.7,486.57 610.3,486.04 610.9,485.63 611.5,485.44 612.1,485.65 612.7,486.22 613.3,486.33 613.9,485.58 614.5,485.89 615.1,486.16 615.7,487.11 616.3,487.14 616.9,486.79 617.5,486.31 618.1,486.02 618.7,486.66 619.3,486.34 619.9,486.18 620.5,485.47 621.1,486.15 621.7,486.66 622.3,486.79 622.9,486.26 623.5,485.84 624.1,485.85 624.7,485.77 625.3,486.03 625.9,485.96 626.5,486.64 627.1,485.98 627.7,486.48 628.3,485.85 628.9,486.57 629.5,485.70 630.1,486.56 630.7,486.14 631.3,486.22 631.9,485.75 632.5,485.97 633.1,486.15 633.7,486.08 634.3,486.07 634.9,486.33 635.5,485.56 636.1,485.36 636.7,485.55 637.3,486.57 637.9,487.01 638.5,486.68 639.1,487.37 639.7,487.32 640.3,487.63 640.9,487.20 641.5,487.25 642.1,487.20 642.7,486.70 643.3,486.73 643.9,486.83 644.5,486.46 645.1,485.83 645.7,485.85 646.3,486.46 646.9,486.88 647.5,486.95 648.1,486.96 648.7,487.36 649.3,487.00 649.9,486.85 650.5,486.48 651.1,486.88 651.7,487.25 652.3,487.60 652.9,487.24 653.5,487.37 654.1,487.07 654.7,486.90 655.3,486.52 655.9,487.01 656.5,487.56 657.1,487.47 657.7,486.13 658.3,485.68 658.9,485.61 659.5,486.36 660.1,487.28 660.7,487.72 661.3,487.79 661.9,486.82 662.5,486.24 663.1,486.09 663.7,486.23 664.3,487.49 664.9,487.44 665.5,487.39 666.1,486.83 666.7,486.98 667.3,486.79 667.9,486.84 668.5,486.72 669.1,486.69 669.7,486.40 670.3,486.64 670.9,486.94 671.5,487.05 672.1,487.15 672.7,486.98 673.3,486.15 673.9,485.19 674.5,485.41 675.1,486.40 675.7,487.41 676.3,487.86 676.9,488.05 677.5,487.75 678.1,487.64 678.7,486.62 679.3,486.82 679.9,486.61 680.5,487.04 681.1,486.69 681.7,486.24 682.3,486.30 682.9,486.81 683.5,487.03 684.1,487.14 684.7,486.55 685.3,486.73 685.9,486.26 686.5,486.56 687.1,486.41 687.7,486.80 688.3,486.50 688.9,486.20 689.5,486.00 690.1,486.49 690.7,487.31 691.3,487.30 691.9,487.22 692.5,486.96 693.1,487.17 693.7,486.45 694.3,486.32 694.9,485.90 695.5,486.71 696.1,486.84 696.7,487.30 697.3,486.18 697.9,486.12 698.5,486.14 699.1,486.50 699.7,486.60 700.3,486.40 700.9,486.72 701.5,486.21 702.1,485.87 702.7,485.78 703.3,486.92 703.9,487.27 704.5,487.46 705.1,486.33 705.7,486.07 706.3,485.84 706.9,485.76 707.5,486.19 708.1,486.27 708.7,486.79 709.3,486.17 709.9,486.52 710.5,486.25 711.1,486.79 711.7,486.47 712.3,486.20 712.9,486.36 713.5,486.25 714.1,486.47 714.7,485.83 715.3,486.02 715.9,485.94 716.5,486.29 717.1,486.32 717.7,486.23 718.3,485.72 718.9,485.74 719.5,486.21 720.1,486.84 720.7,486.37 721.3,486.27 721.9,486.17 722.5,486.60 723.1,486.54 723.7,486.33 724.3,486.30 724.9,486.45 725.5,486.39 726.1,485.90 726.7,485.59 727.3,485.80 727.9,485.67 728.5,485.50 729.1,485.62 729.7,486.13 730.3,486.36 730.9,485.81 731.5,486.12 732.1,486.62 732.7,486.94 733.3,486.45 733.9,485.58 734.5,485.91 735.1,486.16 735.7,486.27 736.3,486.37 736.9,486.57 737.5,486.99 738.1,486.10 738.7,485.84 739.3,485.85 739.9,486.01 740.5,486.33 741.1,486.57 741.7,487.25 742.3,486.76 742.9,486.12 743.5,486.10 744.1,486.61 744.7,487.20 745.3,487.28 745.9,486.95 746.5,486.47 747.1,485.55 747.7,485.82 748.3,486.63 748.9,487.05 749.5,486.68 750.1,486.20 750.7,486.45 751.3,486.19 751.9,485.78 752.5,485.35 753.1,486.37 753.7,486.37 754.3,486.96 754.9,486.94 755.5,487.73 756.1,487.90 756.7,487.82 757.3,486.89 757.9,486.36 758.5,485.66 759.1,485.95 759.7,486.84 760.3,486.56 760.9,486.82 761.5,485.67 762.1,486.58 762.7,486.81 763.3,487.03 763.9,487.25 764.5,486.89 765.1,487.44 765.7,486.92 766.3,486.73 766.9,486.23 767.5,486.11 768.1,486.47 768.7,486.63 769.3,487.38 769.9,487.14 770.5,486.96 771.1,486.05 771.7,485.88 772.3,485.59 772.9,485.51 773.5,486.02 774.1,486.48 774.7,486.73 775.3,486.57 775.9,486.87 776.5,487.11 777.1,487.24 777.7,486.76 778.3,486.50 778.9,486.04 779.5,486.18 780.1,486.02 780.7,486.15 781.3,486.13 781.9,486.31 782.5,486.35 783.1,486.26 783.7,486.72 784.3,486.70 784.9,486.54 785.5,486.21 786.1,485.99 786.7,485.98 787.3,485.95 787.9,485.78 788.5,485.13 789.1,485.20 789.7,486.01 790.3,486.48 790.9,486.12 791.5,485.99 792.1,485.90 792.7,485.90 793.3,485.37 793.9,485.91 794.5,485.58 795.1,486.21 795.7,486.23 796.3,486.91 796.9,486.55 797.5,485.95 798.1,485.82 798.7,485.52 799.3,486.16 799.9,485.95" fill="none" stroke="#4b4bff" stroke-width="1.25" stroke-linejoin="round"/>
<rect x="188.00" y="468.00" width="612.40" height="142.00" fill="none" stroke="#858585" stroke-width="2.0"/>
<text x="183.80" y="613.90" font-family="Liberation Serif" font-size="12" fill="#555" text-anchor="end" textLength="7.25" lengthAdjust="spacingAndGlyphs">0</text>
<text x="183.80" y="578.26" font-family="Liberation Serif" font-size="12" fill="#555" text-anchor="end" textLength="29.00" lengthAdjust="spacingAndGlyphs">2500</text>
<text x="183.80" y="542.62" font-family="Liberation Serif" font-size="12" fill="#555" text-anchor="end" textLength="29.00" lengthAdjust="spacingAndGlyphs">5000</text>
<text x="183.80" y="506.99" font-family="Liberation Serif" font-size="12" fill="#555" text-anchor="end" textLength="29.00" lengthAdjust="spacingAndGlyphs">7500</text>
<text x="185.18" y="625.00" font-family="Liberation Serif" font-size="12" fill="#555" textLength="7.25" lengthAdjust="spacingAndGlyphs">0</text>
<text x="237.93" y="625.00" font-family="Liberation Serif" font-size="12" fill="#555" textLength="21.75" lengthAdjust="spacingAndGlyphs">100</text>
<text x="297.93" y="625.00" font-family="Liberation Serif" font-size="12" fill="#555" textLength="21.75" lengthAdjust="spacingAndGlyphs">200</text>
<text x="357.93" y="625.00" font-family="Liberation Serif" font-size="12" fill="#555" textLength="21.75" lengthAdjust="spacingAndGlyphs">300</text>
<text x="417.93" y="625.00" font-family="Liberation Serif" font-size="12" fill="#555" textLength="21.75" lengthAdjust="spacingAndGlyphs">400</text>
<text x="477.93" y="625.00" font-family="Liberation Serif" font-size="12" fill="#555" textLength="21.75" lengthAdjust="spacingAndGlyphs">500</text>
<text x="537.92" y="625.00" font-family="Liberation Serif" font-size="12" fill="#555" textLength="21.75" lengthAdjust="spacingAndGlyphs">600</text>
<text x="597.92" y="625.00" font-family="Liberation Serif" font-size="12" fill="#555" textLength="21.75" lengthAdjust="spacingAndGlyphs">700</text>
<text x="657.92" y="625.00" font-family="Liberation Serif" font-size="12" fill="#555" textLength="21.75" lengthAdjust="spacingAndGlyphs">800</text>
<text x="717.92" y="625.00" font-family="Liberation Serif" font-size="12" fill="#555" textLength="21.75" lengthAdjust="spacingAndGlyphs">900</text>
<text x="774.30" y="625.00" font-family="Liberation Serif" font-size="12" fill="#555" textLength="29.00" lengthAdjust="spacingAndGlyphs">1000</text>
<rect x="694.40" y="478.90" width="14.2" height="10.2" fill="#fff" fill-opacity="0.6" stroke="#cccccc" stroke-width="1"/>
<rect x="695.90" y="480.40" width="11.2" height="7.6" fill="#0000ee"/>
<text x="713.30" y="488.60" font-family="Liberation Serif" font-size="12" fill="#888888" textLength="79" lengthAdjust="spacingAndGlyphs">aida02 1.8.W</text>
<path d="M799.40 458.00 L810.40 469.00 L799.40 480.00 L788.40 469.00 Z" fill="#ff0000"/>
<rect x="1194.00" y="469" width="1" height="140" fill="#000" fill-opacity="0.085"/>
<rect x="1254.00" y="469" width="1" height="140" fill="#000" fill-opacity="0.085"/>
<rect x="1314.00" y="469" width="1" height="140" fill="#000" fill-opacity="0.085"/>
<rect x="1374.00" y="469" width="1" height="140" fill="#000" fill-opacity="0.085"/>
<rect x="1434.00" y="469" width="1" height="140" fill="#000" fill-opacity="0.085"/>
<rect x="1494.00" y="469" width="1" height="140" fill="#000" fill-opacity="0.085"/>
<rect x="1554.00" y="469" width="1" height="140" fill="#000" fill-opacity="0.085"/>
<rect x="1614.00" y="469" width="1" height="140" fill="#000" fill-opacity="0.085"/>
<rect x="1674.00" y="469" width="1" height="140" fill="#000" fill-opacity="0.085"/>
<rect x="1734.00" y="469" width="1" height="140" fill="#000" fill-opacity="0.085"/>
<rect x="1135.0" y="563.80" width="610.4000000000001" height="1" fill="#000" fill-opacity="0.085"/>
<rect x="1135.0" y="517.80" width="610.4000000000001" height="1" fill="#000" fill-opacity="0.085"/>
<rect x="1135.0" y="471.80" width="610.4000000000001" height="1" fill="#000" fill-opacity="0.085"/>
<polyline points="1134.5,530.70 1135.1,530.70 1135.7,530.70 1136.3,530.70 1136.9,530.69 1137.5,530.69 1138.1,530.69 1138.7,530.69 1139.3,530.69 1139.9,530.69 1140.5,530.68 1141.1,530.68 1141.7,530.68 1142.3,530.68 1142.9,530.68 1143.5,530.68 1144.1,530.68 1144.7,530.67 1145.3,530.67 1145.9,530.67 1146.5,530.67 1147.1,530.67 1147.7,530.67 1148.3,530.67 1148.9,530.66 1149.5,530.66 1150.1,530.66 1150.7,530.66 1151.3,530.66 1151.9,530.66 1152.5,530.65 1153.1,530.65 1153.7,530.65 1154.3,530.65 1154.9,530.65 1155.5,530.65 1156.1,530.65 1156.7,530.64 1157.3,530.64 1157.9,530.64 1158.5,530.64 1159.1,530.64 1159.7,530.64 1160.3,530.63 1160.9,530.63 1161.5,530.63 1162.1,530.63 1162.7,530.63 1163.3,530.63 1163.9,530.63 1164.5,530.62 1165.1,530.62 1165.7,530.62 1166.3,530.62 1166.9,530.62 1167.5,530.62 1168.1,530.62 1168.7,530.61 1169.3,530.61 1169.9,530.61 1170.5,530.61 1171.1,530.61 1171.7,530.61 1172.3,530.60 1172.9,530.60 1173.5,530.60 1174.1,530.60 1174.7,530.60 1175.3,530.60 1175.9,530.60 1176.5,530.59 1177.1,530.59 1177.7,530.59 1178.3,530.59 1178.9,530.59 1179.5,530.59 1180.1,530.58 1180.7,530.58 1181.3,530.58 1181.9,530.58 1182.5,530.58 1183.1,530.58 1183.7,530.58 1184.3,530.57 1184.9,530.57 1185.5,530.57 1186.1,530.57 1186.7,530.57 1187.3,530.57 1187.9,530.57 1188.5,530.56 1189.1,530.56 1189.7,530.56 1190.3,530.56 1190.9,530.56 1191.5,530.56 1192.1,530.55 1192.7,530.55 1193.3,530.55 1193.9,530.55 1194.5,530.55 1195.1,530.55 1195.7,530.55 1196.3,530.54 1196.9,530.54 1197.5,530.54 1198.1,530.54 1198.7,530.54 1199.3,530.54 1199.9,530.53 1200.5,530.53 1201.1,530.53 1201.7,530.53 1202.3,530.53 1202.9,530.53 1203.5,530.53 1204.1,530.52 1204.7,530.52 1205.3,530.52 1205.9,530.52 1206.5,530.52 1207.1,530.52 1207.7,530.52 1208.3,530.51 1208.9,530.51 1209.5,530.51 1210.1,530.51 1210.7,530.51 1211.3,530.51 1211.9,530.50 1212.5,530.50 1213.1,530.50 1213.7,530.50 1214.3,530.50 1214.9,530.50 1215.5,530.50 1216.1,530.49 1216.7,530.49 1217.3,530.49 1217.9,530.49 1218.5,530.49 1219.1,530.49 1219.7,530.48 1220.3,530.48 1220.9,530.48 1221.5,530.48 1222.1,530.48 1222.7,530.48 1223.3,530.48 1223.9,530.47 1224.5,530.47 1225.1,530.47 1225.7,530.47 1226.3,530.47 1226.9,530.47 1227.5,530.47 1228.1,530.46 1228.7,530.46 1229.3,530.46 1229.9,530.46 1230.5,530.46 1231.1,530.46 1231.7,530.45 1232.3,530.45 1232.9,530.45 1233.5,530.45 1234.1,530.45 1234.7,530.45 1235.3,530.45 1235.9,530.44 1236.5,530.44 1237.1,530.44 1237.7,530.44 1238.3,530.44 1238.9,530.44 1239.5,530.43 1240.1,530.43 1240.7,530.43 1241.3,530.43 1241.9,530.43 1242.5,530.43 1243.1,530.43 1243.7,530.42 1244.3,530.42 1244.9,530.42 1245.5,530.42 1246.1,530.42 1246.7,530.42 1247.3,530.42 1247.9,530.41 1248.5,530.41 1249.1,530.41 1249.7,530.41 1250.3,530.41 1250.9,530.41 1251.5,530.40 1252.1,530.40 1252.2,530.40 1252.2,530.40 1252.3,530.40 1252.3,530.40 1252.4,530.40 1252.5,530.40 1252.5,530.40 1252.6,530.40 1252.6,530.40 1252.7,530.40 1252.8,530.40 1252.8,530.40 1252.9,530.40 1252.9,530.40 1253.0,530.40 1253.1,530.40 1253.1,530.40 1253.2,530.40 1253.2,530.40 1253.3,529.57 1253.4,529.50 1253.4,529.42 1253.5,529.34 1253.5,529.26 1253.6,529.16 1253.7,529.06 1253.7,528.95 1253.8,528.83 1253.8,528.70 1253.9,528.56 1254.0,528.41 1254.0,528.24 1254.1,528.07 1254.1,527.88 1254.2,527.68 1254.3,527.46 1254.3,527.23 1254.4,526.98 1254.4,526.71 1254.5,526.42 1254.6,526.11 1254.6,525.78 1254.7,525.42 1254.7,525.04 1254.8,524.64 1254.9,524.21 1254.9,523.76 1255.0,523.28 1255.0,522.76 1255.1,522.22 1255.2,521.65 1255.2,521.05 1255.3,520.42 1255.3,519.75 1255.4,519.06 1255.5,518.33 1255.5,517.57 1255.6,516.79 1255.6,515.97 1255.7,515.13 1255.8,514.26 1255.8,513.37 1255.9,512.45 1255.9,511.52 1256.0,510.56 1256.1,509.60 1256.1,508.62 1256.2,507.64 1256.2,506.65 1256.3,505.65 1256.4,504.66 1256.4,503.68 1256.5,502.70 1256.5,501.74 1256.6,500.78 1256.7,499.85 1256.7,498.93 1256.8,498.04 1256.8,497.17 1256.9,496.33 1257.0,495.51 1257.0,494.73 1257.1,493.97 1257.1,493.24 1257.2,492.55 1257.3,491.88 1257.3,491.25 1257.4,490.65 1257.4,490.08 1257.5,489.54 1257.6,489.02 1257.6,488.54 1257.7,488.09 1257.7,487.66 1257.8,487.26 1257.9,486.88 1257.9,486.52 1258.0,486.19 1258.0,485.88 1258.1,485.59 1258.2,485.32 1258.2,485.07 1258.3,484.84 1258.3,484.62 1258.4,484.42 1258.5,484.23 1258.5,484.06 1258.6,483.89 1258.6,483.74 1258.7,483.60 1258.8,483.47 1258.8,483.35 1258.9,483.24 1258.9,483.14 1259.0,483.04 1259.1,482.96 1259.1,482.88 1259.2,482.80 1259.2,482.73 1259.3,482.67 1259.4,482.61 1259.4,482.55 1259.5,482.50 1259.5,482.45 1259.6,482.41 1259.7,482.37 1259.7,482.34 1259.8,482.30 1259.8,482.27 1259.9,482.24 1260.0,482.21 1260.0,482.19 1260.1,482.17 1260.1,482.15 1260.2,482.13 1260.3,482.11 1260.3,482.09 1260.4,482.08 1260.4,482.06 1260.5,482.05 1260.6,482.04 1260.6,482.03 1260.7,482.02 1260.7,482.01 1260.8,482.00 1260.9,481.99 1260.9,481.99 1261.0,481.98 1261.0,481.97 1261.1,481.97 1261.2,481.96 1261.2,481.96 1261.3,481.95 1261.3,481.95 1261.4,481.94 1261.5,481.94 1261.5,481.94 1261.6,481.93 1261.6,481.93 1261.7,481.90 1261.8,481.90 1261.8,481.90 1261.9,481.89 1261.9,481.89 1262.0,481.89 1262.1,481.89 1262.1,481.88 1262.2,481.88 1262.2,481.88 1262.3,481.88 1262.4,481.87 1262.4,481.87 1262.5,481.87 1262.5,481.87 1262.6,481.87 1262.7,481.86 1262.7,481.86 1262.8,481.86 1262.8,481.86 1262.9,481.85 1263.0,481.85 1263.0,481.85 1263.1,481.85 1263.1,481.84 1263.2,481.84 1263.3,481.84 1263.3,481.84 1263.4,481.84 1263.4,481.83 1263.5,481.83 1264.1,481.81 1264.7,481.78 1265.3,481.76 1265.9,481.74 1266.5,481.72 1267.1,481.69 1267.7,481.67 1268.3,481.65 1268.9,481.62 1269.5,481.69 1270.1,481.70 1270.7,481.71 1271.3,481.72 1271.9,481.73 1272.5,481.74 1273.1,481.75 1273.7,481.76 1274.3,481.77 1274.9,481.78 1275.5,481.79 1276.1,481.79 1276.7,481.80 1277.3,481.81 1277.9,481.82 1278.5,481.83 1279.1,481.84 1279.7,481.85 1280.3,481.86 1280.9,481.87 1281.5,481.88 1282.1,481.89 1282.7,481.90 1283.3,481.91 1283.9,481.91 1284.5,481.92 1285.1,481.93 1285.7,481.94 1286.3,481.95 1286.9,481.96 1287.5,481.97 1288.1,481.98 1288.7,481.99 1289.3,482.00 1289.9,482.01 1290.5,482.02 1291.1,482.03 1291.7,482.04 1292.3,482.04 1292.9,482.05 1293.5,482.06 1294.1,482.07 1294.7,482.08 1295.3,482.09 1295.9,482.10 1296.5,482.11 1297.1,482.12 1297.7,482.13 1298.3,482.14 1298.9,482.15 1299.5,482.16 1300.1,482.16 1300.7,482.17 1301.3,482.18 1301.9,482.19 1302.5,482.20 1303.1,482.21 1303.7,482.22 1304.3,482.23 1304.9,482.24 1305.5,482.25 1306.1,482.26 1306.7,482.27 1307.3,482.28 1307.9,482.29 1308.5,482.29 1309.1,482.30 1309.7,482.31 1310.3,482.32 1310.9,482.33 1311.5,482.34 1312.1,482.35 1312.7,482.36 1313.3,482.37 1313.9,482.38 1314.5,482.39 1315.1,482.40 1315.7,482.41 1316.3,482.42 1316.9,482.42 1317.5,482.43 1318.1,482.44 1318.7,482.45 1319.3,482.46 1319.9,482.47 1320.5,482.48 1321.1,482.49 1321.7,482.50 1322.3,482.51 1322.9,482.52 1323.5,482.53 1324.1,482.54 1324.7,482.54 1325.3,482.55 1325.9,482.56 1326.5,482.57 1327.1,482.58 1327.7,482.59 1328.3,482.60 1328.9,482.61 1329.5,482.62 1330.1,482.63 1330.7,482.64 1331.3,482.65 1331.9,482.66 1332.5,482.67 1333.1,482.67 1333.7,482.68 1334.3,482.69 1334.9,482.70 1335.5,482.71 1336.1,482.72 1336.7,482.73 1337.3,482.74 1337.9,482.75 1338.5,482.76 1339.1,482.77 1339.7,482.78 1340.3,482.79 1340.9,482.79 1341.5,482.80 1342.1,482.81 1342.7,482.82 1343.3,482.83 1343.9,482.84 1344.5,482.85 1345.1,482.86 1345.7,482.87 1346.3,482.88 1346.9,482.89 1347.5,482.90 1348.1,482.91 1348.7,482.92 1349.3,482.92 1349.9,482.93 1350.5,482.94 1351.1,482.95 1351.7,482.96 1352.3,482.97 1352.9,482.98 1353.5,482.99 1354.1,483.00 1354.7,483.01 1355.3,483.02 1355.9,483.03 1356.5,483.04 1357.1,483.04 1357.7,483.05 1358.3,483.06 1358.9,483.07 1359.5,483.08 1360.1,483.09 1360.7,483.10 1361.3,483.11 1361.9,483.12 1362.5,483.13 1363.1,483.14 1363.7,483.15 1364.3,483.16 1364.9,483.17 1365.5,483.17 1366.1,483.18 1366.7,483.19 1367.3,483.20 1367.9,483.21 1368.5,483.22 1369.1,483.23 1369.7,483.24 1370.3,483.25 1370.9,483.26 1371.5,483.27 1372.1,483.28 1372.7,483.29 1373.3,483.29 1373.9,483.30 1374.5,483.31 1375.1,483.32 1375.7,483.33 1376.3,483.34 1376.9,483.35 1377.5,483.36 1378.1,483.37 1378.7,483.38 1379.3,483.39 1379.9,483.40 1380.5,483.41 1381.1,483.42 1381.7,483.42 1382.3,483.43 1382.9,483.44 1383.5,483.45 1384.1,483.46 1384.7,483.47 1385.3,483.48 1385.9,483.49 1386.5,483.50 1387.1,483.51 1387.7,483.52 1388.3,483.53 1388.9,483.54 1389.5,483.55 1390.1,483.55 1390.7,483.56 1391.3,483.57 1391.9,483.58 1392.5,483.59 1393.1,483.60 1393.7,483.61 1394.3,483.62 1394.9,483.63 1395.5,483.64 1396.1,483.65 1396.7,483.66 1397.3,483.67 1397.9,483.67 1398.5,483.68 1399.1,483.69 1399.7,483.70 1400.3,483.71 1400.9,483.72 1401.5,483.73 1402.1,483.74 1402.7,483.75 1403.3,483.76 1403.9,483.77 1404.5,483.78 1405.1,483.79 1405.7,483.80 1406.3,483.80 1406.9,483.81 1407.5,483.82 1408.1,483.83 1408.7,483.84 1409.3,483.85 1409.9,483.86 1410.5,483.87 1411.1,483.88 1411.7,483.89 1412.3,483.90 1412.9,483.91 1413.5,483.92 1414.1,483.92 1414.7,483.93 1415.3,483.94 1415.9,483.95 1416.5,483.96 1417.1,483.97 1417.7,483.98 1418.3,483.99 1418.9,484.00 1419.5,484.01 1420.1,484.02 1420.7,484.03 1421.3,484.04 1421.9,484.05 1422.5,484.05 1423.1,484.06 1423.7,484.07 1424.3,484.08 1424.9,484.09 1425.5,484.10 1426.1,484.11 1426.7,484.12 1427.3,484.13 1427.9,484.14 1428.5,484.15 1429.1,484.16 1429.7,484.17 1430.3,484.17 1430.9,484.18 1431.5,484.19 1432.1,484.20 1432.7,484.21 1433.3,484.22 1433.9,484.23 1434.5,484.24 1435.1,484.25 1435.7,484.26 1436.3,484.27 1436.9,484.28 1437.5,484.29 1438.1,484.30 1438.7,484.30 1439.3,484.31 1439.9,484.32 1440.5,484.33 1441.1,484.34 1441.7,484.35 1442.3,484.36 1442.9,484.37 1443.5,484.38 1444.1,484.39 1444.7,484.40 1445.3,484.41 1445.9,484.42 1446.5,484.42 1447.1,484.43 1447.7,484.44 1448.3,484.45 1448.9,484.46 1449.5,484.47 1450.1,484.48 1450.7,484.49 1451.3,484.50 1451.9,484.51 1452.5,484.52 1453.1,484.53 1453.7,484.54 1454.3,484.55 1454.9,484.55 1455.5,484.56 1456.1,484.57 1456.7,484.58 1457.3,484.59 1457.9,484.60 1458.5,484.61 1459.1,484.62 1459.7,484.63 1460.3,484.64 1460.9,484.65 1461.5,484.66 1462.1,484.67 1462.7,484.68 1463.3,484.68 1463.9,484.69 1464.5,484.70 1465.1,484.71 1465.7,484.72 1466.3,484.73 1466.9,484.74 1467.5,484.75 1468.1,484.76 1468.7,484.77 1469.3,484.78 1469.9,484.79 1470.5,484.80 1471.1,484.80 1471.7,484.81 1472.3,484.82 1472.9,484.83 1473.5,484.84 1474.1,484.85 1474.7,484.86 1475.3,484.87 1475.9,484.88 1476.5,484.89 1477.1,484.90 1477.7,484.91 1478.3,484.92 1478.9,484.93 1479.5,484.93 1480.1,484.94 1480.7,484.95 1481.3,484.96 1481.9,484.97 1482.5,484.98 1483.1,484.99 1483.7,485.00 1484.3,485.01 1484.9,485.02 1485.5,485.03 1486.1,485.04 1486.7,485.05 1487.3,485.05 1487.9,485.06 1488.5,485.07 1489.1,485.08 1489.7,485.09 1490.3,485.10 1490.9,485.11 1491.5,485.12 1492.1,485.13 1492.7,485.14 1493.3,485.15 1493.9,485.16 1494.5,485.17 1495.1,485.18 1495.7,485.18 1496.3,485.19 1496.9,485.20 1497.5,485.21 1498.1,485.22 1498.7,485.23 1499.3,485.24 1499.9,485.25 1500.5,485.26 1501.1,485.27 1501.7,485.28 1502.3,485.29 1502.9,485.30 1503.5,485.30 1504.1,485.31 1504.7,485.32 1505.3,485.33 1505.9,485.34 1506.5,485.35 1507.1,485.36 1507.7,485.37 1508.3,485.38 1508.9,485.39 1509.5,485.40 1510.1,485.41 1510.7,485.42 1511.3,485.43 1511.9,485.43 1512.5,485.44 1513.1,485.45 1513.7,485.46 1514.3,485.47 1514.9,485.48 1515.5,485.49 1516.1,485.50 1516.7,485.51 1517.3,485.52 1517.9,485.53 1518.5,485.54 1519.1,485.55 1519.7,485.55 1520.3,485.56 1520.9,485.57 1521.5,485.58 1522.1,485.59 1522.7,485.60 1523.3,485.61 1523.9,485.62 1524.5,485.63 1525.1,485.64 1525.7,485.65 1526.3,485.66 1526.9,485.67 1527.5,485.68 1528.1,485.68 1528.7,485.69 1529.3,485.70 1529.9,485.71 1530.5,485.72 1531.1,485.73 1531.7,485.74 1532.3,485.75 1532.9,485.76 1533.5,485.77 1534.1,485.78 1534.7,485.79 1535.3,485.80 1535.9,485.81 1536.5,485.81 1537.1,485.82 1537.7,485.83 1538.3,485.84 1538.9,485.85 1539.5,485.86 1540.1,485.87 1540.7,485.88 1541.3,485.89 1541.9,485.90 1542.5,485.91 1543.1,485.92 1543.7,485.93 1544.3,485.93 1544.9,485.94 1545.5,485.95 1546.1,485.96 1546.7,485.97 1547.3,485.98 1547.9,485.99 1548.5,486.00 1549.1,486.01 1549.7,486.02 1550.3,486.03 1550.9,486.04 1551.5,486.05 1552.1,486.06 1552.7,486.06 1553.3,486.07 1553.9,486.08 1554.5,486.09 1555.1,486.10 1555.7,486.11 1556.3,486.12 1556.9,486.13 1557.5,486.14 1558.1,486.15 1558.7,486.16 1559.3,486.17 1559.9,486.18 1560.5,486.18 1561.1,486.19 1561.7,486.20 1562.3,486.21 1562.9,486.22 1563.5,486.23 1564.1,486.24 1564.7,486.25 1565.3,486.26 1565.9,486.27 1566.5,486.28 1567.1,486.29 1567.7,486.30 1568.3,486.31 1568.9,486.31 1569.5,486.32 1570.1,486.33 1570.7,486.34 1571.3,486.35 1571.9,486.36 1572.5,486.37 1573.1,486.38 1573.7,486.39 1574.3,486.40 1574.9,486.41 1575.5,486.42 1576.1,486.43 1576.7,486.43 1577.3,486.44 1577.9,486.45 1578.5,486.46 1579.1,486.47 1579.7,486.48 1580.3,486.49 1580.9,486.50 1581.5,486.51 1582.1,486.52 1582.7,486.53 1583.3,486.54 1583.9,486.55 1584.5,486.56 1585.1,486.56 1585.7,486.57 1586.3,486.58 1586.9,486.59 1587.5,486.60 1588.1,486.61 1588.7,486.62 1589.3,486.63 1589.9,486.64 1590.5,486.65 1591.1,486.66 1591.7,486.67 1592.3,486.68 1592.9,486.68 1593.5,486.69 1594.1,486.70 1594.7,486.71 1595.3,486.72 1595.9,486.73 1596.5,486.74 1597.1,486.75 1597.7,486.76 1598.3,486.77 1598.9,486.78 1599.5,486.79 1600.1,486.80 1600.7,486.81 1601.3,486.81 1601.9,486.82 1602.5,486.83 1603.1,486.84 1603.7,486.85 1604.3,486.86 1604.9,486.87 1605.5,486.88 1606.1,486.89 1606.7,486.90 1607.3,486.91 1607.9,486.92 1608.5,486.93 1609.1,486.94 1609.7,486.94 1610.3,486.95 1610.9,486.96 1611.5,486.97 1612.1,486.98 1612.7,486.99 1613.3,487.00 1613.9,487.01 1614.5,487.02 1615.1,487.03 1615.7,487.04 1616.3,487.05 1616.9,487.06 1617.5,487.06 1618.1,487.07 1618.7,487.08 1619.3,487.09 1619.9,487.10 1620.5,487.11 1621.1,487.12 1621.7,487.13 1622.3,487.14 1622.9,487.15 1623.5,487.16 1624.1,487.17 1624.7,487.18 1625.3,487.19 1625.9,487.19 1626.5,487.20 1627.1,487.21 1627.7,487.22 1628.3,487.23 1628.9,487.24 1629.5,487.25 1630.1,487.26 1630.7,487.27 1631.3,487.28 1631.9,487.29 1632.5,487.30 1633.1,487.31 1633.7,487.31 1634.3,487.32 1634.9,487.33 1635.5,487.34 1636.1,487.35 1636.7,487.36 1637.3,487.37 1637.9,487.38 1638.5,487.39 1639.1,487.40 1639.7,487.41 1640.3,487.42 1640.9,487.43 1641.5,487.44 1642.1,487.44 1642.7,487.45 1643.3,487.46 1643.9,487.47 1644.5,487.48 1644.6,487.48 1644.6,487.48 1644.7,487.48 1644.7,487.49 1644.8,487.49 1644.9,487.49 1644.9,487.49 1645.0,487.49 1645.0,487.49 1645.1,487.49 1645.2,487.49 1645.2,487.49 1645.3,487.49 1645.3,487.49 1645.4,487.50 1645.5,487.50 1645.5,487.50 1645.6,487.50 1645.6,487.50 1645.7,487.50 1645.8,487.78 1645.8,488.05 1645.9,488.32 1645.9,488.60 1646.0,488.86 1646.1,489.13 1646.1,489.40 1646.2,489.66 1646.2,489.93 1646.3,490.19 1646.4,490.45 1646.4,490.70 1646.5,490.96 1646.5,491.21 1646.6,491.47 1646.7,491.72 1646.7,491.97 1646.8,492.21 1646.8,492.46 1646.9,492.71 1647.0,492.95 1647.0,493.19 1647.1,493.43 1647.1,493.67 1647.2,493.91 1647.3,494.14 1647.3,494.37 1647.4,494.61 1647.4,494.84 1647.5,495.07 1647.6,495.29 1647.6,495.52 1647.7,495.75 1647.7,495.97 1647.8,496.19 1647.9,496.41 1647.9,496.63 1648.0,496.85 1648.0,497.07 1648.1,497.28 1648.2,497.49 1648.2,497.71 1648.3,497.92 1648.3,498.13 1648.4,498.34 1648.5,498.54 1648.5,498.75 1648.6,498.95 1648.6,499.15 1648.7,499.36 1648.8,499.56 1648.8,499.76 1648.9,499.95 1648.9,500.15 1649.0,500.34 1649.1,500.54 1649.1,500.73 1649.2,500.92 1649.2,501.11 1649.3,501.30 1649.4,501.49 1649.4,501.68 1649.5,501.86 1649.5,502.05 1649.6,502.23 1649.7,502.41 1649.7,502.59 1649.8,502.77 1649.8,502.95 1649.9,503.13 1650.0,503.30 1650.0,503.48 1650.1,503.65 1650.1,503.82 1650.2,504.00 1650.3,504.17 1650.3,504.33 1650.4,504.50 1650.4,504.67 1650.5,504.84 1650.6,505.00 1650.6,505.17 1650.7,505.33 1650.7,505.49 1650.8,505.65 1650.9,505.81 1650.9,505.97 1651.0,506.13 1651.0,506.28 1651.1,506.44 1651.2,506.59 1651.2,506.75 1651.3,506.90 1651.3,507.05 1651.4,507.20 1651.5,507.35 1651.5,507.50 1651.6,507.65 1651.6,507.80 1651.7,507.94 1651.8,508.09 1651.8,508.23 1651.9,508.38 1651.9,508.52 1652.0,508.66 1652.1,508.80 1652.1,508.94 1652.2,509.08 1652.2,509.22 1652.3,509.35 1652.4,509.49 1652.4,509.62 1652.5,509.76 1652.5,509.89 1652.6,510.02 1652.7,510.16 1652.7,510.29 1652.8,510.42 1652.8,510.55 1652.9,510.67 1653.0,510.80 1653.0,510.93 1653.1,511.05 1653.1,511.18 1653.2,511.30 1653.3,511.43 1653.3,511.55 1653.4,511.67 1653.4,511.79 1653.5,511.91 1653.6,512.03 1653.6,512.15 1653.7,512.27 1653.7,512.39 1653.8,512.50 1653.9,512.62 1653.9,512.73 1654.0,512.85 1654.0,512.96 1654.1,513.07 1654.2,513.19 1654.2,513.30 1654.3,513.41 1654.3,513.52 1654.4,513.63 1654.5,513.74 1654.5,513.84 1654.6,513.95 1654.6,514.06 1654.7,514.16 1654.8,514.27 1654.8,514.37 1654.9,514.48 1654.9,514.58 1655.0,514.68 1655.1,514.78 1655.1,514.88 1655.2,514.98 1655.2,515.08 1655.3,515.18 1655.4,515.28 1655.4,515.38 1655.5,515.48 1655.5,515.57 1655.6,515.67 1655.7,515.76 1655.7,515.86 1655.8,515.95 1655.8,516.05 1655.9,516.14 1656.0,516.23 1656.0,516.32 1656.1,516.42 1656.1,516.51 1656.2,516.60 1656.3,516.69 1656.3,516.77 1656.4,516.86 1656.4,516.95 1656.5,517.04 1656.6,517.12 1656.6,517.21 1656.7,517.30 1656.7,517.38 1656.8,517.46 1656.9,517.55 1656.9,517.63 1657.0,517.71 1657.0,517.80 1657.1,517.88 1657.2,517.96 1657.2,518.04 1657.3,518.12 1657.3,518.20 1657.4,518.28 1657.5,518.36 1657.5,518.44 1657.6,518.51 1657.6,518.59 1657.7,518.67 1657.8,518.74 1657.8,518.82 1657.9,518.89 1657.9,518.97 1658.0,519.04 1658.1,519.12 1658.1,519.19 1658.2,519.26 1658.2,519.33 1658.3,519.41 1658.4,519.48 1658.4,519.55 1658.5,519.62 1658.5,519.69 1658.6,519.76 1658.7,519.83 1658.7,519.90 1658.8,519.96 1658.8,520.03 1658.9,520.10 1659.0,520.17 1659.0,520.23 1659.1,520.30 1659.1,520.36 1659.2,520.43 1659.3,520.49 1659.3,520.56 1659.4,520.62 1659.4,520.69 1659.5,520.75 1659.6,520.81 1659.6,520.87 1659.7,520.94 1659.7,521.00 1659.8,521.06 1659.9,521.12 1659.9,521.18 1660.0,521.24 1660.0,521.30 1660.1,521.36 1660.2,521.42 1660.2,521.48 1660.3,521.53 1660.3,521.59 1660.4,521.65 1660.5,521.71 1660.5,521.76 1660.6,521.82 1660.6,521.87 1660.7,521.93 1660.8,521.98 1660.8,522.04 1660.9,522.09 1660.9,522.15 1661.0,522.20 1661.1,522.26 1661.1,522.31 1661.2,522.36 1661.2,522.41 1661.3,522.47 1661.4,522.52 1661.4,522.57 1661.5,522.62 1661.5,522.67 1661.6,522.72 1661.7,522.77 1661.7,522.82 1661.8,522.87 1661.8,522.92 1661.9,522.97 1662.0,523.02 1662.0,523.06 1662.1,523.11 1662.1,523.16 1662.2,523.21 1662.3,523.25 1662.3,523.30 1662.4,523.35 1662.4,523.39 1662.5,523.44 1662.6,523.48 1662.6,523.53 1662.7,523.57 1662.7,523.62 1662.8,523.66 1662.9,523.71 1662.9,523.75 1663.0,523.79 1663.0,523.84 1663.1,523.88 1663.2,523.92 1663.2,523.96 1663.3,524.01 1663.3,524.05 1663.4,524.09 1663.5,524.13 1663.5,524.17 1663.6,524.21 1663.6,524.25 1663.7,524.29 1663.8,524.33 1663.8,524.37 1663.9,524.41 1663.9,524.45 1664.0,524.49 1664.1,524.53 1664.1,524.57 1664.2,524.61 1664.2,524.64 1664.3,524.68 1664.4,524.72 1664.4,524.76 1664.5,524.79 1664.5,524.83 1664.6,524.87 1664.7,524.90 1664.7,524.94 1664.8,524.97 1664.8,525.01 1664.9,525.04 1665.0,525.08 1665.0,525.11 1665.1,525.15 1665.1,525.18 1665.2,525.22 1665.3,525.25 1665.3,525.29 1665.4,525.32 1665.4,525.35 1665.5,525.39 1665.6,525.42 1665.6,525.45 1665.7,525.48 1665.7,525.52 1665.8,525.55 1665.9,525.58 1665.9,525.61 1666.0,525.64 1666.0,525.67 1666.1,525.70 1666.2,525.74 1666.2,525.77 1666.3,525.80 1666.3,525.83 1666.4,525.86 1666.5,525.89 1666.5,525.92 1666.6,525.95 1666.6,525.98 1666.7,526.00 1666.8,526.03 1666.8,526.06 1666.9,526.09 1666.9,526.12 1667.0,526.15 1667.1,526.17 1667.1,526.20 1667.2,526.23 1667.2,526.26 1667.3,526.29 1667.4,526.31 1667.4,526.34 1667.5,526.37 1667.5,526.39 1667.6,526.42 1667.7,526.45 1667.7,526.47 1667.8,526.50 1667.8,526.52 1667.9,526.55 1668.0,526.57 1668.0,526.60 1668.1,526.62 1668.1,526.65 1668.2,526.67 1668.3,526.70 1668.3,526.72 1668.4,526.75 1668.4,526.77 1668.5,526.80 1668.6,526.82 1668.6,526.84 1668.7,526.87 1668.7,526.89 1668.8,526.91 1668.9,526.94 1668.9,526.96 1669.0,526.98 1669.0,527.00 1669.1,527.03 1669.2,527.05 1669.2,527.07 1669.3,527.09 1669.3,527.12 1669.4,527.14 1669.5,527.16 1669.5,527.18 1669.6,527.20 1669.6,527.22 1669.7,527.24 1669.8,527.26 1669.8,527.29 1669.9,527.31 1669.9,527.33 1670.0,527.35 1670.1,527.37 1670.1,527.39 1670.2,527.41 1670.2,527.43 1670.3,527.45 1670.4,527.47 1670.4,527.49 1670.5,527.51 1670.5,527.53 1670.6,527.54 1670.7,527.56 1670.7,527.58 1670.8,527.60 1670.8,527.62 1670.9,527.64 1671.0,527.66 1671.0,527.67 1671.1,527.69 1671.1,527.71 1671.2,527.73 1671.3,527.75 1671.3,527.76 1671.4,527.78 1671.4,527.80 1671.5,527.82 1671.6,527.83 1671.6,527.85 1671.7,527.87 1671.7,527.89 1671.8,527.90 1671.9,527.92 1671.9,527.94 1672.0,527.95 1672.0,527.97 1672.1,527.98 1672.2,528.00 1672.2,528.02 1672.3,528.03 1672.3,528.05 1672.4,528.06 1672.5,528.08 1672.5,528.10 1672.6,528.11 1672.6,528.13 1672.7,528.14 1672.8,528.16 1672.8,528.17 1672.9,528.19 1672.9,528.20 1673.0,528.22 1673.1,528.23 1673.1,528.25 1673.2,528.26 1673.2,528.27 1673.3,528.29 1673.4,528.30 1673.4,528.32 1673.5,528.33 1673.5,528.35 1673.6,528.36 1673.7,528.37 1673.7,528.39 1673.8,528.40 1673.8,528.41 1673.9,528.43 1674.0,528.44 1674.0,528.45 1674.1,528.47 1674.1,528.48 1674.2,528.49 1674.3,528.51 1674.3,528.52 1674.4,528.53 1674.4,528.54 1674.5,528.56 1675.1,528.68 1675.7,528.79 1676.3,528.90 1676.9,529.00 1677.5,529.09 1678.1,529.18 1678.7,529.26 1679.3,529.34 1679.9,529.41 1680.5,529.48 1681.1,529.54 1681.7,529.60 1682.3,529.66 1682.9,529.71 1683.5,529.76 1684.1,529.81 1684.7,529.85 1685.3,529.89 1685.9,529.93 1686.5,529.97 1687.1,530.00 1687.7,530.03 1688.3,530.06 1688.9,530.09 1689.5,530.11 1690.1,530.14 1690.7,530.16 1691.3,530.18 1691.9,530.20 1692.5,530.22 1693.1,530.24 1693.7,530.25 1694.3,530.27 1694.9,530.28 1695.5,530.30 1696.1,530.31 1696.7,530.32 1697.3,530.33 1697.9,530.34 1698.5,530.35 1699.1,530.36 1699.7,530.37 1700.3,530.38 1700.9,530.39 1701.5,530.39 1702.1,530.40 1702.7,530.41 1703.3,530.41 1703.9,530.42 1704.5,530.42 1705.1,530.43 1705.7,530.43 1706.3,530.44 1706.9,530.44 1707.5,530.44 1708.1,530.45 1708.7,530.45 1709.3,530.45 1709.9,530.46 1710.5,530.46 1711.1,530.46 1711.7,530.46 1712.3,530.47 1712.9,530.47 1713.5,530.47 1714.1,530.47 1714.7,530.47 1715.3,530.48 1715.9,530.48 1716.5,530.48 1717.1,530.48 1717.7,530.48 1718.3,530.48 1718.9,530.48 1719.5,530.48 1720.1,530.49 1720.7,530.49 1721.3,530.49 1721.9,530.49 1722.5,530.49 1723.1,530.49 1723.7,530.49 1724.3,530.49 1724.9,530.49 1725.5,530.49 1726.1,530.49 1726.7,530.49 1727.3,530.49 1727.9,530.49 1728.5,530.49 1729.1,530.49 1729.7,530.49 1730.3,530.50 1730.9,530.50 1731.5,530.50 1732.1,530.50 1732.7,530.50 1733.3,530.50 1733.9,530.50 1734.5,530.50 1735.1,530.50 1735.7,530.50 1736.3,530.50 1736.9,530.50 1737.5,530.50 1738.1,530.50 1738.7,530.50 1739.3,530.50 1739.9,530.50 1740.5,530.50 1741.1,530.50 1741.7,530.50 1742.3,530.50 1742.9,530.50 1743.5,530.50 1744.1,530.50 1744.7,530.50 1745.3,530.50 1745.9,530.50" fill="none" stroke="#4b4bff" stroke-width="1.25" stroke-linejoin="round"/>
<rect x="1134.00" y="468.00" width="612.40" height="142.00" fill="none" stroke="#858585" stroke-width="2.0"/>
<text x="1129.80" y="614.80" font-family="Liberation Serif" font-size="12" fill="#555" text-anchor="end" textLength="7.25" lengthAdjust="spacingAndGlyphs">0</text>
<text x="1129.80" y="568.80" font-family="Liberation Serif" font-size="12" fill="#555" text-anchor="end" textLength="29.00" lengthAdjust="spacingAndGlyphs">5000</text>
<text x="1129.80" y="522.80" font-family="Liberation Serif" font-size="12" fill="#555" text-anchor="end" textLength="36.25" lengthAdjust="spacingAndGlyphs">10000</text>
<text x="1129.80" y="476.80" font-family="Liberation Serif" font-size="12" fill="#555" text-anchor="end" textLength="36.25" lengthAdjust="spacingAndGlyphs">15000</text>
<text x="1131.17" y="625.00" font-family="Liberation Serif" font-size="12" fill="#555" textLength="7.25" lengthAdjust="spacingAndGlyphs">0</text>
<text x="1183.92" y="625.00" font-family="Liberation Serif" font-size="12" fill="#555" textLength="21.75" lengthAdjust="spacingAndGlyphs">100</text>
<text x="1243.92" y="625.00" font-family="Liberation Serif" font-size="12" fill="#555" textLength="21.75" lengthAdjust="spacingAndGlyphs">200</text>
<text x="1303.92" y="625.00" font-family="Liberation Serif" font-size="12" fill="#555" textLength="21.75" lengthAdjust="spacingAndGlyphs">300</text>
<text x="1363.92" y="625.00" font-family="Liberation Serif" font-size="12" fill="#555" textLength="21.75" lengthAdjust="spacingAndGlyphs">400</text>
<text x="1423.92" y="625.00" font-family="Liberation Serif" font-size="12" fill="#555" textLength="21.75" lengthAdjust="spacingAndGlyphs">500</text>
<text x="1483.92" y="625.00" font-family="Liberation Serif" font-size="12" fill="#555" textLength="21.75" lengthAdjust="spacingAndGlyphs">600</text>
<text x="1543.92" y="625.00" font-family="Liberation Serif" font-size="12" fill="#555" textLength="21.75" lengthAdjust="spacingAndGlyphs">700</text>
<text x="1603.92" y="625.00" font-family="Liberation Serif" font-size="12" fill="#555" textLength="21.75" lengthAdjust="spacingAndGlyphs">800</text>
<text x="1663.92" y="625.00" font-family="Liberation Serif" font-size="12" fill="#555" textLength="21.75" lengthAdjust="spacingAndGlyphs">900</text>
<text x="1720.30" y="625.00" font-family="Liberation Serif" font-size="12" fill="#555" textLength="29.00" lengthAdjust="spacingAndGlyphs">1000</text>
<rect x="1640.40" y="478.90" width="14.2" height="10.2" fill="#fff" fill-opacity="0.6" stroke="#cccccc" stroke-width="1"/>
<rect x="1641.90" y="480.40" width="11.2" height="7.6" fill="#0000ee"/>
<text x="1659.30" y="488.60" font-family="Liberation Serif" font-size="12" fill="#888888" textLength="79" lengthAdjust="spacingAndGlyphs">aida04 1.8.W</text>
<path d="M1745.40 458.00 L1756.40 469.00 L1745.40 480.00 L1734.40 469.00 Z" fill="#ff0000"/>
<rect x="248.00" y="651" width="1" height="139" fill="#000" fill-opacity="0.085"/>
<rect x="308.00" y="651" width="1" height="139" fill="#000" fill-opacity="0.085"/>
<rect x="368.00" y="651" width="1" height="139" fill="#000" fill-opacity="0.085"/>
<rect x="428.00" y="651" width="1" height="139" fill="#000" fill-opacity="0.085"/>
<rect x="488.00" y="651" width="1" height="139" fill="#000" fill-opacity="0.085"/>
<rect x="548.00" y="651" width="1" height="139" fill="#000" fill-opacity="0.085"/>
<rect x="608.00" y="651" width="1" height="139" fill="#000" fill-opacity="0.085"/>
<rect x="668.00" y="651" width="1" height="139" fill="#000" fill-opacity="0.085"/>
<rect x="728.00" y="651" width="1" height="139" fill="#000" fill-opacity="0.085"/>
<rect x="788.00" y="651" width="1" height="139" fill="#000" fill-opacity="0.085"/>
<rect x="189.0" y="755.45" width="610.4" height="1" fill="#000" fill-opacity="0.085"/>
<rect x="189.0" y="720.70" width="610.4" height="1" fill="#000" fill-opacity="0.085"/>
<rect x="189.0" y="685.95" width="610.4" height="1" fill="#000" fill-opacity="0.085"/>
<rect x="189.0" y="651.20" width="610.4" height="1" fill="#000" fill-opacity="0.085"/>
<polyline points="188.5,668.85 189.1,668.41 189.7,668.49 190.3,668.40 190.9,668.48 191.5,668.79 192.1,669.17 192.7,669.66 193.3,669.94 193.9,670.28 194.5,670.37 195.1,670.52 195.7,670.40 196.3,670.23 196.9,669.97 197.5,670.02 198.1,670.30 198.7,670.89 199.3,671.31 199.9,671.55 200.5,671.87 201.1,672.16 201.7,673.17 202.3,673.88 202.9,674.69 203.5,674.90 204.1,675.18 204.7,675.47 205.3,675.95 205.9,676.49 206.5,676.44 207.1,676.51 207.7,676.14 208.3,676.05 208.9,675.53 209.5,675.10 210.1,674.68 210.7,674.22 211.3,673.62 211.9,672.68 212.5,671.82 213.1,671.08 213.7,670.62 214.3,669.95 214.9,669.04 215.5,668.29 216.1,667.83 216.7,668.09 217.3,668.13 217.9,668.40 218.5,668.36 219.1,668.29 219.7,668.30 220.3,668.53 220.9,669.00 221.5,668.90 222.1,669.04 222.7,668.97 223.3,668.93 223.9,668.77 224.5,668.49 225.1,668.57 225.7,668.82 226.3,669.47 226.9,669.70 227.5,669.30 228.1,668.96 228.7,668.58 229.3,668.06 229.9,667.00 230.5,666.84 231.1,666.37 231.7,666.06 232.3,665.58 232.9,665.83 233.5,666.05 234.1,666.27 234.7,666.19 235.3,666.38 235.9,666.33 236.5,666.37 237.1,666.57 237.7,667.18 238.3,667.45 238.9,667.82 239.5,667.92 240.1,668.46 240.7,668.92 241.3,669.02 241.9,669.57 242.5,670.12 243.1,671.15 243.7,671.90 244.3,672.26 244.9,672.29 245.5,672.84 246.1,673.45 246.7,673.58 247.3,673.40 247.9,673.21 248.5,673.52 249.1,673.28 249.7,673.33 250.3,673.27 250.9,673.42 251.5,673.55 252.1,673.51 252.7,673.13 253.3,672.40 253.9,672.03 254.5,672.21 255.1,672.45 255.7,672.20 256.3,671.96 256.9,671.65 257.5,671.44 258.1,671.13 258.7,670.88 259.3,670.67 259.9,670.43 260.5,670.43 261.1,670.87 261.7,670.76 262.3,670.78 262.9,670.55 263.5,670.75 264.1,670.50 264.7,670.74 265.3,671.01 265.9,671.55 266.5,671.44 267.1,671.50 267.7,671.34 268.3,671.47 268.9,671.17 269.5,671.15 270.1,670.95 270.7,670.86 271.3,670.78 271.9,670.67 272.5,670.70 273.1,670.75 273.7,670.89 274.3,671.52 274.9,671.96 275.5,672.31 276.1,672.12 276.7,671.67 277.3,671.56 277.9,671.19 278.5,671.26 279.1,671.15 279.7,671.38 280.3,671.68 280.9,671.65 281.5,672.18 282.1,671.95 282.7,672.27 283.3,671.54 283.9,671.81 284.5,671.44 285.1,671.77 285.7,671.55 286.3,671.75 286.9,671.53 287.5,671.21 288.1,670.58 288.7,670.36 289.3,669.75 289.9,669.39 290.5,668.65 291.1,668.58 291.7,668.35 292.3,668.36 292.9,668.42 293.5,668.47 294.1,668.61 294.7,668.39 295.3,668.73 295.9,668.58 296.5,668.97 297.1,668.76 297.7,668.71 298.3,668.51 298.9,668.58 299.5,668.83 300.1,668.85 300.7,668.73 301.3,668.17 301.9,668.02 302.5,667.77 303.1,668.00 303.7,667.99 304.3,667.81 304.9,667.92 305.5,668.06 306.1,668.24 306.7,667.87 307.3,667.63 307.9,667.51 308.5,667.71 309.1,667.64 309.7,667.29 310.3,667.12 310.9,666.57 311.5,666.69 312.1,666.72 312.7,666.77 313.3,666.75 313.9,666.55 314.5,666.83 315.1,667.04 315.7,667.23 316.3,667.11 316.9,666.96 317.5,667.01 318.1,667.01 318.7,667.08 319.3,667.22 319.9,667.34 320.5,667.43 321.1,667.62 321.7,667.89 322.3,667.77 322.9,667.56 323.5,668.07 324.1,669.15 324.7,669.39 325.3,669.31 325.9,669.08 326.5,669.34 327.1,669.03 327.7,669.24 328.3,669.38 328.9,669.82 329.5,669.48 330.1,669.45 330.7,669.61 331.3,669.99 331.9,670.27 332.5,670.33 333.1,670.67 333.7,670.84 334.3,670.78 334.9,670.56 335.5,670.58 336.1,670.75 336.7,671.16 337.3,671.01 337.9,671.18 338.5,671.04 339.1,670.92 339.7,671.08 340.3,670.88 340.9,670.90 341.5,670.47 342.1,670.10 342.7,669.88 343.3,670.16 343.9,670.31 344.5,670.36 345.1,669.96 345.7,669.92 346.3,669.65 346.9,669.38 347.5,669.13 348.1,669.26 348.7,669.14 349.3,669.18 349.9,668.75 350.5,668.42 351.1,667.65 351.7,667.47 352.3,667.44 352.9,667.45 353.5,667.23 354.1,666.74 354.7,666.50 355.3,666.28 355.9,666.28 356.5,666.44 357.1,666.48 357.7,666.55 358.3,666.46 358.9,666.19 359.5,666.19 360.1,665.92 360.7,665.72 361.3,665.34 361.9,665.31 362.5,665.30 363.1,665.92 363.7,666.07 364.3,666.70 364.9,666.31 365.5,666.63 366.1,666.86 366.7,667.32 367.3,667.76 367.9,668.15 368.5,668.81 369.1,669.02 369.7,669.58 370.3,669.93 370.9,670.46 371.5,670.41 372.1,670.85 372.7,671.34 373.3,672.53 373.9,672.67 374.5,673.28 375.1,673.30 375.7,673.77 376.3,673.66 376.9,673.58 377.5,673.23 378.1,673.36 378.7,673.05 379.3,672.95 379.9,672.38 380.5,671.57 381.1,671.05 381.7,670.38 382.3,670.12 382.9,669.97 383.5,669.99 384.1,669.80 384.7,669.18 385.3,668.53 385.9,668.07 386.5,667.85 387.1,667.63 387.7,667.52 388.3,667.33 388.9,667.26 389.5,667.29 390.1,667.44 390.7,667.07 391.3,666.76 391.9,666.42 392.5,666.65 393.1,666.46 393.7,666.60 394.3,666.58 394.9,666.48 395.5,666.26 396.1,665.40 396.7,665.30 397.3,664.58 397.9,664.95 398.5,664.91 399.1,665.10 399.7,664.61 400.3,664.08 400.9,663.91 401.5,663.78 402.1,664.00 402.7,663.53 403.3,663.63 403.9,663.56 404.5,663.41 405.1,663.12 405.7,663.03 406.3,663.57 406.9,663.82 407.5,664.38 408.1,664.77 408.7,665.61 409.3,665.85 409.9,666.42 410.5,667.13 411.1,667.68 411.7,668.38 412.3,668.92 412.9,669.70 413.5,669.69 414.1,669.94 414.7,669.71 415.3,670.14 415.9,669.94 416.5,670.04 417.1,670.05 417.7,669.45 418.3,669.62 418.9,669.65 419.5,670.21 420.1,670.35 420.7,670.65 421.3,671.03 421.9,671.04 422.5,671.14 423.1,671.34 423.7,671.62 424.3,671.69 424.9,671.17 425.5,670.99 426.1,671.11 426.7,671.39 427.3,671.93 427.9,672.16 428.5,672.32 429.1,672.00 429.7,671.79 430.3,672.03 430.9,672.38 431.5,672.29 432.1,672.09 432.7,671.52 433.3,671.30 433.9,670.80 434.5,670.76 435.1,670.41 435.7,669.81 436.3,669.26 436.9,668.53 437.5,668.64 438.1,668.07 438.7,668.25 439.3,668.09 439.9,668.54 440.5,668.35 441.1,668.19 441.7,668.11 442.3,667.92 442.9,668.02 443.5,667.89 444.1,668.26 444.7,668.16 445.3,668.11 445.9,668.00 446.5,668.76 447.1,669.20 447.7,669.81 448.3,669.69 448.9,669.85 449.5,670.10 450.1,669.80 450.7,669.86 451.3,669.52 451.9,669.78 452.5,669.53 453.1,669.40 453.7,669.36 454.3,669.88 454.9,670.06 455.5,670.23 456.1,670.03 456.7,670.31 457.3,670.62 457.9,670.73 458.5,670.66 459.1,670.62 459.7,670.48 460.3,670.57 460.9,670.83 461.5,670.90 462.1,670.75 462.7,670.19 463.3,670.36 463.9,670.67 464.5,670.90 465.1,670.85 465.7,670.98 466.3,671.08 466.9,671.27 467.5,671.00 468.1,671.22 468.7,671.20 469.3,671.15 469.9,670.67 470.5,670.80 471.1,670.43 471.7,670.15 472.3,669.00 472.9,669.09 473.5,669.05 474.1,669.28 474.7,668.68 475.3,668.51 475.9,668.25 476.5,668.23 477.1,668.14 477.7,668.34 478.3,668.59 478.9,668.67 479.5,668.93 480.1,669.22 480.7,669.50 481.3,669.75 481.9,670.04 482.5,670.54 483.1,670.83 483.7,671.11 484.3,670.99 484.9,671.17 485.5,671.25 486.1,671.25 486.7,671.19 487.3,670.95 487.9,670.76 488.5,670.40 489.1,670.01 489.7,670.24 490.3,669.86 490.9,670.20 491.5,669.68 492.1,669.75 492.7,669.60 493.3,669.73 493.9,669.38 494.5,669.09 495.1,668.69 495.7,669.19 496.3,669.20 496.9,669.77 497.5,669.95 498.1,670.26 498.7,670.79 499.3,671.63 499.9,672.25 500.5,672.62 501.1,672.88 501.7,673.77 502.3,674.17 502.9,674.55 503.5,674.74 504.1,675.35 504.7,675.35 505.3,675.82 505.9,676.00 506.5,675.74 507.1,674.85 507.7,674.11 508.3,673.71 508.9,673.17 509.5,672.48 510.1,671.86 510.7,671.29 511.3,670.86 511.9,670.57 512.5,670.54 513.1,670.64 513.7,670.99 514.3,671.13 514.9,671.60 515.5,671.68 516.1,672.22 516.7,672.58 517.3,673.06 517.9,673.37 518.5,673.20 519.1,673.19 519.7,673.10 520.3,673.18 520.9,673.13 521.5,672.89 522.1,672.44 522.7,671.85 523.3,671.04 523.9,670.33 524.5,669.69 525.1,669.12 525.7,668.28 526.3,667.86 526.9,667.47 527.5,667.18 528.1,666.43 528.7,666.09 529.3,665.77 529.9,665.70 530.5,665.60 531.1,665.64 531.7,665.88 532.3,665.95 532.9,666.50 533.5,666.97 534.1,667.67 534.7,668.18 535.3,668.75 535.9,669.31 536.5,670.03 537.1,670.46 537.7,670.84 538.3,671.37 538.9,672.20 539.5,672.96 540.1,673.76 540.7,674.31 541.3,675.01 541.9,675.11 542.5,675.06 543.1,674.78 543.7,675.06 544.3,675.33 544.9,675.44 545.5,675.35 546.1,675.47 546.7,675.39 547.3,675.11 547.9,674.42 548.5,673.82 549.1,672.91 549.7,672.76 550.3,672.26 550.9,672.09 551.5,671.53 552.1,671.56 552.7,670.99 553.3,670.68 553.9,670.22 554.5,670.66 555.1,670.58 555.7,670.59 556.3,670.61 556.9,670.61 557.5,670.77 558.1,670.39 558.7,670.16 559.3,669.96 559.9,669.54 560.5,669.07 561.1,668.55 561.7,668.50 562.3,668.37 562.9,668.35 563.5,668.04 564.1,667.82 564.7,667.50 565.3,667.12 565.9,666.84 566.5,666.30 567.1,665.94 567.7,665.62 568.3,665.62 568.9,665.72 569.5,665.76 570.1,665.49 570.7,665.09 571.3,664.88 571.9,664.71 572.5,664.77 573.1,664.82 573.7,665.19 574.3,665.13 574.9,665.64 575.5,666.25 576.1,667.01 576.7,667.84 577.3,668.25 577.9,668.78 578.5,669.09 579.1,669.16 579.7,669.90 580.3,669.57 580.9,669.86 581.5,669.54 582.1,669.65 582.7,669.32 583.3,668.72 583.9,668.33 584.5,668.09 585.1,668.14 585.7,667.54 586.3,667.41 586.9,666.88 587.5,667.05 588.1,666.87 588.7,666.96 589.3,667.28 589.9,667.22 590.5,667.72 591.1,667.80 591.7,668.46 592.3,668.82 592.9,669.22 593.5,669.81 594.1,670.61 594.7,671.10 595.3,671.14 595.9,671.20 596.5,671.68 597.1,671.46 597.7,671.05 598.3,670.47 598.9,670.67 599.5,670.47 600.1,670.14 600.7,669.71 601.3,669.57 601.9,669.22 602.5,668.96 603.1,668.50 603.7,668.61 604.3,668.30 604.9,667.93 605.5,667.19 606.1,666.94 606.7,666.96 607.3,667.10 607.9,667.22 608.5,666.90 609.1,666.96 609.7,666.69 610.3,666.65 610.9,666.40 611.5,666.66 612.1,666.89 612.7,666.97 613.3,666.71 613.9,666.75 614.5,666.70 615.1,666.95 615.7,666.86 616.3,666.84 616.9,666.61 617.5,666.37 618.1,666.28 618.7,666.22 619.3,666.32 619.9,666.44 620.5,666.40 621.1,666.37 621.7,666.49 622.3,666.39 622.9,666.06 623.5,666.35 624.1,666.75 624.7,667.47 625.3,667.70 625.9,668.28 626.5,668.95 627.1,669.41 627.7,669.86 628.3,670.21 628.9,670.52 629.5,670.83 630.1,670.52 630.7,671.18 631.3,671.45 631.9,672.09 632.5,672.09 633.1,671.97 633.7,672.09 634.3,671.52 634.9,671.13 635.5,670.87 636.1,670.60 636.7,670.03 637.3,669.42 637.9,669.01 638.5,668.70 639.1,668.21 639.7,667.82 640.3,667.68 640.9,667.34 641.5,667.02 642.1,666.96 642.7,666.85 643.3,666.67 643.9,666.33 644.5,666.88 645.1,666.75 645.7,666.82 646.3,665.93 646.9,666.12 647.5,666.09 648.1,666.42 648.7,666.59 649.3,666.90 649.9,666.98 650.5,666.72 651.1,666.38 651.7,666.36 652.3,666.39 652.9,666.49 653.5,666.59 654.1,666.77 654.7,667.16 655.3,666.78 655.9,666.77 656.5,666.60 657.1,666.70 657.7,666.39 658.3,666.67 658.9,667.21 659.5,667.86 660.1,668.02 660.7,668.03 661.3,668.13 661.9,668.63 662.5,669.26 663.1,669.61 663.7,669.71 664.3,670.35 664.9,670.76 665.5,670.76 666.1,670.25 666.7,670.52 667.3,670.82 667.9,671.10 668.5,670.96 669.1,670.84 669.7,670.73 670.3,670.58 670.9,670.64 671.5,670.59 672.1,670.60 672.7,669.91 673.3,669.57 673.9,669.50 674.5,669.71 675.1,669.94 675.7,669.41 676.3,669.44 676.9,669.13 677.5,669.41 678.1,669.21 678.7,669.22 679.3,669.14 679.9,669.37 680.5,669.88 681.1,670.05 681.7,670.14 682.3,669.96 682.9,670.18 683.5,670.57 684.1,670.82 684.7,670.93 685.3,671.03 685.9,671.25 686.5,671.52 687.1,671.42 687.7,671.14 688.3,670.98 688.9,670.49 689.5,670.21 690.1,669.63 690.7,669.47 691.3,668.96 691.9,668.72 692.5,667.94 693.1,667.86 693.7,667.74 694.3,668.07 694.9,667.71 695.5,667.85 696.1,667.77 696.7,668.08 697.3,668.30 697.9,668.46 698.5,668.84 699.1,668.35 699.7,668.62 700.3,668.59 700.9,669.06 701.5,668.87 702.1,669.01 702.7,669.02 703.3,669.53 703.9,669.47 704.5,669.30 705.1,669.31 705.7,669.27 706.3,669.57 706.9,669.55 707.5,670.07 708.1,670.22 708.7,670.22 709.3,670.00 709.9,669.99 710.5,669.95 711.1,670.10 711.7,670.07 712.3,670.29 712.9,670.64 713.5,671.05 714.1,671.22 714.7,671.39 715.3,671.46 715.9,671.71 716.5,672.24 717.1,672.81 717.7,673.24 718.3,673.07 718.9,673.04 719.5,672.93 720.1,673.16 720.7,673.71 721.3,674.07 721.9,674.36 722.5,674.20 723.1,674.31 723.7,674.29 724.3,674.90 724.9,674.90 725.5,674.57 726.1,674.03 726.7,673.73 727.3,673.63 727.9,672.92 728.5,672.59 729.1,671.84 729.7,671.48 730.3,670.67 730.9,670.08 731.5,669.55 732.1,669.16 732.7,668.44 733.3,668.03 733.9,667.73 734.5,667.83 735.1,667.56 735.7,667.36 736.3,667.36 736.9,667.25 737.5,667.42 738.1,667.64 738.7,667.61 739.3,667.52 739.9,667.23 740.5,667.40 741.1,667.67 741.7,667.95 742.3,668.19 742.9,668.07 743.5,668.61 744.1,668.89 744.7,669.14 745.3,668.86 745.9,669.06 746.5,669.28 747.1,669.37 747.7,669.08 748.3,668.70 748.9,668.90 749.5,669.24 750.1,669.89 750.7,669.75 751.3,669.69 751.9,669.03 752.5,669.22 753.1,669.08 753.7,669.45 754.3,669.37 754.9,669.56 755.5,669.83 756.1,670.31 756.7,670.58 757.3,670.86 757.9,670.99 758.5,671.72 759.1,672.18 759.7,672.34 760.3,672.37 760.9,672.76 761.5,673.07 762.1,673.26 762.7,673.35 763.3,673.30 763.9,673.35 764.5,673.27 765.1,673.77 765.7,674.06 766.3,674.06 766.9,673.68 767.5,673.36 768.1,673.43 768.7,673.54 769.3,673.61 769.9,673.32 770.5,673.43 771.1,673.40 771.7,673.83 772.3,673.59 772.9,673.50 773.5,672.88 774.1,672.64 774.7,672.20 775.3,672.18 775.9,671.97 776.5,671.70 777.1,672.04 777.7,672.16 778.3,672.45 778.9,672.08 779.5,672.02 780.1,671.90 780.7,671.94 781.3,671.89 781.9,671.91 782.5,671.25 783.1,671.01 783.7,670.37 784.3,670.05 784.9,669.79 785.5,669.69 786.1,669.75 786.7,669.47 787.3,668.85 787.9,668.62 788.5,668.68 789.1,668.94 789.7,668.95 790.3,668.85 790.9,669.20 791.5,668.78 792.1,668.76 792.7,668.79 793.3,669.62 793.9,670.37 794.5,670.71 795.1,670.87 795.7,671.26 796.3,671.94 796.9,673.01 797.5,673.54 798.1,673.94 798.7,674.19 799.3,673.86 799.9,673.79" fill="none" stroke="#4b4bff" stroke-width="1.25" stroke-linejoin="round"/>
<rect x="188.00" y="650.00" width="612.40" height="141.00" fill="none" stroke="#858585" stroke-width="2.0"/>
<text x="183.80" y="795.20" font-family="Liberation Serif" font-size="12" fill="#555" text-anchor="end" textLength="7.25" lengthAdjust="spacingAndGlyphs">0</text>
<text x="183.80" y="760.45" font-family="Liberation Serif" font-size="12" fill="#555" text-anchor="end" textLength="29.00" lengthAdjust="spacingAndGlyphs">2500</text>
<text x="183.80" y="725.70" font-family="Liberation Serif" font-size="12" fill="#555" text-anchor="end" textLength="29.00" lengthAdjust="spacingAndGlyphs">5000</text>
<text x="183.80" y="690.95" font-family="Liberation Serif" font-size="12" fill="#555" text-anchor="end" textLength="29.00" lengthAdjust="spacingAndGlyphs">7500</text>
<text x="183.80" y="656.20" font-family="Liberation Serif" font-size="12" fill="#555" text-anchor="end" textLength="36.25" lengthAdjust="spacingAndGlyphs">10000</text>
<text x="185.18" y="807.00" font-family="Liberation Serif" font-size="12" fill="#555" textLength="7.25" lengthAdjust="spacingAndGlyphs">0</text>
<text x="237.93" y="807.00" font-family="Liberation Serif" font-size="12" fill="#555" textLength="21.75" lengthAdjust="spacingAndGlyphs">100</text>
<text x="297.93" y="807.00" font-family="Liberation Serif" font-size="12" fill="#555" textLength="21.75" lengthAdjust="spacingAndGlyphs">200</text>
<text x="357.93" y="807.00" font-family="Liberation Serif" font-size="12" fill="#555" textLength="21.75" lengthAdjust="spacingAndGlyphs">300</text>
<text x="417.93" y="807.00" font-family="Liberation Serif" font-size="12" fill="#555" textLength="21.75" lengthAdjust="spacingAndGlyphs">400</text>
<text x="477.93" y="807.00" font-family="Liberation Serif" font-size="12" fill="#555" textLength="21.75" lengthAdjust="spacingAndGlyphs">500</text>
<text x="537.92" y="807.00" font-family="Liberation Serif" font-size="12" fill="#555" textLength="21.75" lengthAdjust="spacingAndGlyphs">600</text>
<text x="597.92" y="807.00" font-family="Liberation Serif" font-size="12" fill="#555" textLength="21.75" lengthAdjust="spacingAndGlyphs">700</text>
<text x="657.92" y="807.00" font-family="Liberation Serif" font-size="12" fill="#555" textLength="21.75" lengthAdjust="spacingAndGlyphs">800</text>
<text x="717.92" y="807.00" font-family="Liberation Serif" font-size="12" fill="#555" textLength="21.75" lengthAdjust="spacingAndGlyphs">900</text>
<text x="774.30" y="807.00" font-family="Liberation Serif" font-size="12" fill="#555" textLength="29.00" lengthAdjust="spacingAndGlyphs">1000</text>
<rect x="694.40" y="660.90" width="14.2" height="10.2" fill="#fff" fill-opacity="0.6" stroke="#cccccc" stroke-width="1"/>
<rect x="695.90" y="662.40" width="11.2" height="7.6" fill="#0000ee"/>
<text x="713.30" y="670.60" font-family="Liberation Serif" font-size="12" fill="#888888" textLength="79" lengthAdjust="spacingAndGlyphs">aida06 1.7.W</text>
<path d="M799.40 640.00 L810.40 651.00 L799.40 662.00 L788.40 651.00 Z" fill="#ff0000"/>
<rect x="1194.00" y="651" width="1" height="139" fill="#000" fill-opacity="0.15"/>
<rect x="1254.00" y="651" width="1" height="139" fill="#000" fill-opacity="0.15"/>
<rect x="1314.00" y="651" width="1" height="139" fill="#000" fill-opacity="0.15"/>
<rect x="1374.00" y="651" width="1" height="139" fill="#000" fill-opacity="0.15"/>
<rect x="1434.00" y="651" width="1" height="139" fill="#000" fill-opacity="0.15"/>
<rect x="1494.00" y="651" width="1" height="139" fill="#000" fill-opacity="0.15"/>
<rect x="1554.00" y="651" width="1" height="139" fill="#000" fill-opacity="0.15"/>
<rect x="1614.00" y="651" width="1" height="139" fill="#000" fill-opacity="0.15"/>
<rect x="1674.00" y="651" width="1" height="139" fill="#000" fill-opacity="0.15"/>
<rect x="1734.00" y="651" width="1" height="139" fill="#000" fill-opacity="0.15"/>
<rect x="1135.0" y="755.55" width="610.4000000000001" height="1" fill="#000" fill-opacity="0.15"/>
<rect x="1135.0" y="720.80" width="610.4000000000001" height="1" fill="#000" fill-opacity="0.15"/>
<rect x="1135.0" y="686.05" width="610.4000000000001" height="1" fill="#000" fill-opacity="0.15"/>
<rect x="1135.0" y="651.30" width="610.4000000000001" height="1" fill="#000" fill-opacity="0.15"/>
<polyline points="1134.5,671.42 1135.1,670.80 1135.7,671.29 1136.3,669.65 1136.9,671.36 1137.5,671.42 1138.1,673.20 1138.7,672.19 1139.3,672.14 1139.9,671.11 1140.5,670.84 1141.1,670.58 1141.7,669.96 1142.3,670.08 1142.9,670.33 1143.5,671.01 1144.1,670.98 1144.7,671.77 1145.3,671.77 1145.9,671.66 1146.5,670.57 1147.1,670.24 1147.7,670.33 1148.3,670.04 1148.9,671.37 1149.5,671.57 1150.1,671.82 1150.7,671.07 1151.3,672.10 1151.9,671.85 1152.5,671.12 1153.1,671.33 1153.7,670.63 1154.3,670.73 1154.9,669.73 1155.5,671.68 1156.1,671.33 1156.7,669.64 1157.3,668.73 1157.9,668.92 1158.5,669.96 1159.1,669.82 1159.7,670.17 1160.3,670.50 1160.9,669.98 1161.5,670.51 1162.1,671.12 1162.7,671.34 1163.3,670.38 1163.9,669.94 1164.5,670.15 1165.1,669.81 1165.7,669.15 1166.3,669.43 1166.9,669.91 1167.5,669.97 1168.1,669.51 1168.7,669.53 1169.3,669.70 1169.9,668.55 1170.5,669.50 1171.1,669.61 1171.7,670.17 1172.3,669.77 1172.9,669.83 1173.5,670.31 1174.1,670.35 1174.7,671.40 1175.3,671.69 1175.9,671.99 1176.5,671.94 1177.1,671.12 1177.7,670.00 1178.3,669.28 1178.9,668.93 1179.5,669.08 1180.1,669.37 1180.7,670.85 1181.3,671.32 1181.9,669.64 1182.5,670.35 1183.1,670.36 1183.7,671.79 1184.3,670.82 1184.9,669.63 1185.5,668.48 1186.1,667.59 1186.7,669.55 1187.3,669.89 1187.9,670.43 1188.5,669.29 1189.1,670.06 1189.7,670.48 1190.3,670.78 1190.9,669.82 1191.5,667.90 1192.1,667.87 1192.7,668.70 1193.3,671.05 1193.9,670.93 1194.5,670.48 1195.1,670.06 1195.7,669.30 1196.3,669.09 1196.9,668.35 1197.5,669.34 1198.1,671.03 1198.7,671.99 1199.3,672.46 1199.9,671.48 1200.5,671.23 1201.1,670.39 1201.7,670.12 1202.3,668.69 1202.9,668.29 1203.5,667.76 1204.1,669.51 1204.7,670.51 1205.3,671.81 1205.9,672.19 1206.5,671.68 1207.1,671.63 1207.7,671.84 1208.3,672.00 1208.9,672.02 1209.5,670.89 1210.1,670.03 1210.7,669.52 1211.3,669.17 1211.9,670.09 1212.5,669.78 1213.1,670.39 1213.7,669.19 1214.3,670.56 1214.9,671.11 1215.5,672.07 1216.1,670.47 1216.7,669.75 1217.3,670.30 1217.9,671.01 1218.5,671.23 1219.1,669.82 1219.7,669.00 1220.3,669.50 1220.9,670.68 1221.5,670.48 1222.1,669.30 1222.7,668.40 1223.3,668.67 1223.9,669.77 1224.5,670.43 1225.1,671.58 1225.7,671.06 1226.3,670.37 1226.9,669.42 1227.5,670.56 1228.1,670.96 1228.7,670.74 1229.3,670.18 1229.9,670.65 1230.5,671.21 1231.1,671.35 1231.7,670.34 1232.3,670.58 1232.9,669.21 1233.5,669.41 1234.1,668.75 1234.7,669.95 1235.3,670.64 1235.9,670.09 1236.5,668.86 1237.1,669.77 1237.7,671.33 1238.3,671.34 1238.9,671.84 1239.5,671.08 1240.1,671.03 1240.7,669.64 1241.3,670.35 1241.9,671.88 1242.5,672.52 1243.1,671.78 1243.7,670.60 1244.3,669.25 1244.9,669.44 1245.5,669.42 1246.1,670.35 1246.7,669.71 1247.3,669.75 1247.9,669.14 1248.5,669.17 1249.1,668.81 1249.7,668.74 1250.3,668.75 1250.9,669.71 1251.5,670.32 1252.1,670.24 1252.7,670.21 1253.3,670.32 1253.9,671.83 1254.5,671.45 1255.1,671.18 1255.7,670.00 1256.3,670.17 1256.9,670.55 1257.5,671.01 1258.1,670.79 1258.7,670.82 1259.3,670.76 1259.9,671.02 1260.5,670.18 1261.1,670.23 1261.7,669.53 1262.3,669.55 1262.9,669.50 1263.5,671.17 1264.1,672.15 1264.7,672.04 1265.3,670.76 1265.9,670.72 1266.5,671.45 1267.1,672.18 1267.7,671.50 1268.3,670.82 1268.9,669.94 1269.5,669.85 1270.1,669.24 1270.7,669.25 1271.3,668.20 1271.9,667.97 1272.5,668.30 1273.1,668.94 1273.7,669.85 1274.3,668.87 1274.9,669.14 1275.5,669.03 1276.1,669.13 1276.7,668.91 1277.3,670.01 1277.9,670.17 1278.5,670.14 1279.1,668.45 1279.7,668.81 1280.3,669.15 1280.9,669.97 1281.5,670.36 1282.1,670.13 1282.7,669.37 1283.3,668.15 1283.9,667.53 1284.5,667.30 1285.1,668.46 1285.7,669.32 1286.3,670.15 1286.9,670.25 1287.5,670.09 1288.1,670.78 1288.7,669.98 1289.3,669.72 1289.9,668.34 1290.5,669.24 1291.1,669.51 1291.7,669.35 1292.3,667.48 1292.9,666.69 1293.5,665.55 1294.1,667.69 1294.7,669.70 1295.3,666.82 1295.9,666.01 1296.5,667.04 1297.1,668.70 1297.7,669.42 1298.3,668.91 1298.9,669.46 1299.5,669.36 1300.1,670.21 1300.7,670.84 1301.3,670.92 1301.9,670.77 1302.5,669.55 1303.1,669.84 1303.7,670.73 1304.3,670.78 1304.9,670.06 1305.5,669.29 1306.1,668.92 1306.7,668.87 1307.3,669.28 1307.9,669.50 1308.5,670.15 1309.1,669.74 1309.7,669.57 1310.3,669.47 1310.9,669.76 1311.5,670.88 1312.1,670.51 1312.7,670.83 1313.3,670.19 1313.9,669.98 1314.5,670.26 1315.1,670.38 1315.7,669.95 1316.3,669.88 1316.9,670.29 1317.5,671.00 1318.1,671.60 1318.7,671.17 1319.3,670.98 1319.9,670.36 1320.5,670.08 1321.1,669.98 1321.7,668.50 1322.3,668.83 1322.9,669.16 1323.5,670.68 1324.1,670.75 1324.7,670.87 1325.3,670.23 1325.9,670.98 1326.5,672.19 1327.1,672.88 1327.7,671.73 1328.3,670.26 1328.9,669.64 1329.5,670.74 1330.1,671.52 1330.7,671.57 1331.3,670.00 1331.9,669.84 1332.5,669.52 1333.1,670.19 1333.7,670.50 1334.3,671.56 1334.9,671.62 1335.5,671.03 1336.1,670.57 1336.7,671.47 1337.3,671.86 1337.9,670.98 1338.5,670.84 1339.1,670.77 1339.7,673.42 1340.3,672.32 1340.9,672.13 1341.5,670.07 1342.1,670.53 1342.7,670.26 1343.3,669.62 1343.9,668.37 1344.5,668.61 1345.1,669.13 1345.7,669.86 1346.3,671.08 1346.9,671.78 1347.5,672.69 1348.1,671.26 1348.7,670.99 1349.3,670.28 1349.9,670.44 1350.5,670.68 1351.1,671.12 1351.7,671.39 1352.3,671.07 1352.9,669.95 1353.5,669.39 1354.1,669.51 1354.7,670.09 1355.3,670.07 1355.9,670.05 1356.5,669.75 1357.1,669.80 1357.7,670.08 1358.3,670.39 1358.9,671.52 1359.5,671.32 1360.1,671.96 1360.7,671.79 1361.3,670.34 1361.9,669.85 1362.5,668.54 1363.1,669.45 1363.7,669.44 1364.3,670.81 1364.9,671.03 1365.5,671.98 1366.1,671.02 1366.7,671.01 1367.3,670.17 1367.9,670.96 1368.5,670.96 1369.1,670.58 1369.7,669.89 1370.3,669.15 1370.9,670.17 1371.5,670.75 1372.1,671.74 1372.7,671.20 1373.3,670.47 1373.9,670.02 1374.5,670.30 1375.1,670.20 1375.7,670.00 1376.3,670.41 1376.9,671.68 1377.5,672.26 1378.1,671.69 1378.7,670.95 1379.3,671.56 1379.9,671.04 1380.5,670.98 1381.1,670.47 1381.7,671.49 1382.3,671.31 1382.9,671.17 1383.5,670.13 1384.1,669.91 1384.7,669.43 1385.3,669.74 1385.9,670.57 1386.5,670.55 1387.1,670.18 1387.7,669.48 1388.3,670.05 1388.9,670.74 1389.5,670.28 1390.1,670.28 1390.7,669.36 1391.3,670.41 1391.9,669.70 1392.5,669.65 1393.1,668.87 1393.7,669.35 1394.3,669.39 1394.9,669.87 1395.5,669.98 1396.1,670.54 1396.7,670.56 1397.3,670.94 1397.9,670.50 1398.5,670.34 1399.1,669.84 1399.7,669.12 1400.3,669.32 1400.9,668.91 1401.5,669.61 1402.1,669.15 1402.7,669.60 1403.3,670.15 1403.9,670.64 1404.5,670.20 1405.1,670.39 1405.7,670.34 1406.3,670.49 1406.9,670.10 1407.5,670.29 1408.1,670.72 1408.7,671.10 1409.3,670.72 1409.9,671.08 1410.5,671.89 1411.1,672.07 1411.7,670.60 1412.3,670.33 1412.9,669.78 1413.5,669.89 1414.1,667.70 1414.7,668.23 1415.3,669.55 1415.9,671.35 1416.5,670.92 1417.1,671.10 1417.7,670.53 1418.3,670.42 1418.9,669.68 1419.5,669.84 1420.1,670.18 1420.7,670.36 1421.3,669.08 1421.9,669.89 1422.5,669.37 1423.1,670.89 1423.7,669.63 1424.3,670.02 1424.9,669.58 1425.5,669.17 1426.1,669.29 1426.7,669.72 1427.3,669.98 1427.9,668.66 1428.5,667.98 1429.1,668.13 1429.7,669.31 1430.3,669.65 1430.9,670.96 1431.5,671.25 1432.1,671.13 1432.7,670.36 1433.3,668.48 1433.9,668.14 1434.5,667.56 1435.1,669.05 1435.7,669.71 1436.3,670.32 1436.9,670.88 1437.5,670.35 1438.1,670.40 1438.7,669.84 1439.3,670.22 1439.9,670.23 1440.5,670.16 1441.1,670.27 1441.7,670.09 1442.3,670.79 1442.9,670.62 1443.5,670.81 1444.1,671.65 1444.7,672.05 1445.3,672.17 1445.9,671.37 1446.5,670.50 1447.1,670.62 1447.7,670.45 1448.3,671.23 1448.9,671.37 1449.5,671.40 1450.1,671.81 1450.7,670.95 1451.3,670.77 1451.9,669.85 1452.5,670.86 1453.1,670.71 1453.7,670.32 1454.3,669.72 1454.9,669.13 1455.5,670.35 1456.1,670.12 1456.7,669.49 1457.3,668.77 1457.9,669.50 1458.5,670.85 1459.1,670.73 1459.7,670.53 1460.3,670.67 1460.9,671.80 1461.5,671.94 1462.1,671.84 1462.7,670.64 1463.3,670.32 1463.9,670.29 1464.5,670.73 1465.1,670.80 1465.7,670.02 1466.3,670.32 1466.9,670.11 1467.5,670.94 1468.1,670.59 1468.7,670.43 1469.3,670.38 1469.9,670.86 1470.5,670.85 1471.1,670.90 1471.7,670.08 1472.3,670.48 1472.9,670.32 1473.5,670.05 1474.1,670.45 1474.7,669.98 1475.3,670.70 1475.9,669.39 1476.5,668.95 1477.1,669.26 1477.7,669.22 1478.3,669.04 1478.9,668.59 1479.5,668.51 1480.1,669.51 1480.7,670.59 1481.3,671.21 1481.9,671.51 1482.5,670.84 1483.1,671.19 1483.7,670.94 1484.3,671.44 1484.9,671.27 1485.5,671.52 1486.1,670.79 1486.7,670.15 1487.3,670.14 1487.9,670.11 1488.5,671.13 1489.1,671.33 1489.7,672.13 1490.3,670.79 1490.9,670.13 1491.5,669.05 1492.1,669.60 1492.7,670.11 1493.3,670.32 1493.9,670.85 1494.5,669.77 1495.1,669.31 1495.7,669.20 1496.3,669.82 1496.9,670.00 1497.5,669.97 1498.1,670.06 1498.7,669.81 1499.3,670.75 1499.9,670.53 1500.5,671.43 1501.1,670.86 1501.7,671.72 1502.3,671.07 1502.9,670.21 1503.5,669.93 1504.1,670.36 1504.7,669.63 1505.3,668.00 1505.9,667.57 1506.5,668.59 1507.1,669.82 1507.7,670.31 1508.3,669.99 1508.9,671.51 1509.5,671.75 1510.1,672.93 1510.7,671.67 1511.3,670.08 1511.9,669.50 1512.5,669.05 1513.1,670.36 1513.7,670.16 1514.3,670.78 1514.9,670.07 1515.5,669.92 1516.1,669.55 1516.7,669.59 1517.3,669.52 1517.9,669.82 1518.5,671.21 1519.1,671.32 1519.7,671.41 1520.3,669.78 1520.9,669.63 1521.5,669.34 1522.1,670.22 1522.7,669.90 1523.3,670.02 1523.9,669.78 1524.5,670.98 1525.1,671.14 1525.7,671.33 1526.3,670.41 1526.9,670.03 1527.5,669.27 1528.1,669.02 1528.7,667.89 1529.3,667.64 1529.9,667.38 1530.5,668.28 1531.1,668.99 1531.7,668.93 1532.3,668.92 1532.9,669.05 1533.5,670.23 1534.1,670.21 1534.7,670.09 1535.3,669.39 1535.9,669.91 1536.5,668.95 1537.1,669.26 1537.7,667.53 1538.3,669.24 1538.9,669.58 1539.5,669.68 1540.1,668.49 1540.7,667.24 1541.3,667.41 1541.9,667.46 1542.5,667.72 1543.1,669.18 1543.7,669.11 1544.3,668.98 1544.9,668.38 1545.5,668.85 1546.1,669.86 1546.7,670.15 1547.3,669.15 1547.9,668.28 1548.5,667.91 1549.1,668.25 1549.7,669.06 1550.3,668.97 1550.9,669.37 1551.5,668.78 1552.1,668.98 1552.7,668.22 1553.3,669.52 1553.9,669.20 1554.5,669.60 1555.1,667.57 1555.7,667.82 1556.3,667.48 1556.9,668.59 1557.5,669.26 1558.1,670.31 1558.7,669.91 1559.3,669.95 1559.9,669.54 1560.5,669.75 1561.1,669.12 1561.7,668.97 1562.3,669.23 1562.9,668.55 1563.5,667.88 1564.1,668.30 1564.7,668.57 1565.3,669.32 1565.9,668.88 1566.5,669.02 1567.1,668.60 1567.7,668.33 1568.3,668.09 1568.9,669.01 1569.5,668.90 1570.1,669.27 1570.7,669.40 1571.3,668.83 1571.9,668.20 1572.5,668.19 1573.1,669.68 1573.7,670.52 1574.3,669.79 1574.9,669.78 1575.5,670.02 1576.1,670.95 1576.7,669.37 1577.3,669.04 1577.9,667.98 1578.5,668.37 1579.1,668.76 1579.7,669.70 1580.3,670.04 1580.9,669.63 1581.5,669.98 1582.1,670.59 1582.7,670.68 1583.3,670.24 1583.9,669.97 1584.5,669.39 1585.1,668.87 1585.7,668.98 1586.3,669.98 1586.9,669.64 1587.5,669.09 1588.1,668.47 1588.7,668.32 1589.3,669.34 1589.9,669.90 1590.5,671.40 1591.1,669.69 1591.7,669.04 1592.3,669.33 1592.9,669.75 1593.5,669.23 1594.1,668.41 1594.7,669.99 1595.3,671.30 1595.9,670.69 1596.5,670.17 1597.1,670.07 1597.7,670.72 1598.3,670.65 1598.9,670.88 1599.5,671.36 1600.1,671.89 1600.7,672.03 1601.3,671.35 1601.9,669.67 1602.5,669.41 1603.1,668.71 1603.7,670.89 1604.3,670.00 1604.9,669.83 1605.5,667.67 1606.1,668.49 1606.7,669.63 1607.3,670.94 1607.9,670.89 1608.5,670.33 1609.1,670.42 1609.7,669.91 1610.3,669.54 1610.9,669.59 1611.5,670.24 1612.1,670.54 1612.7,669.93 1613.3,670.19 1613.9,671.18 1614.5,670.75 1615.1,670.79 1615.7,668.94 1616.3,669.55 1616.9,669.17 1617.5,670.46 1618.1,670.48 1618.7,669.44 1619.3,669.43 1619.9,669.63 1620.5,669.99 1621.1,670.13 1621.7,669.79 1622.3,669.09 1622.9,668.70 1623.5,669.10 1624.1,669.47 1624.7,669.80 1625.3,669.68 1625.9,669.82 1626.5,669.68 1627.1,669.98 1627.7,671.03 1628.3,670.65 1628.9,670.72 1629.5,670.52 1630.1,671.11 1630.7,671.37 1631.3,671.58 1631.9,671.71 1632.5,671.43 1633.1,671.40 1633.7,671.88 1634.3,671.32 1634.9,670.04 1635.5,670.19 1636.1,670.68 1636.7,671.90 1637.3,671.11 1637.9,670.64 1638.5,670.42 1639.1,669.91 1639.7,670.36 1640.3,670.36 1640.9,670.36 1641.5,670.10 1642.1,669.89 1642.7,670.38 1643.3,670.53 1643.9,672.12 1644.5,671.58 1645.1,671.52 1645.7,670.48 1646.3,671.27 1646.9,671.84 1647.5,671.25 1648.1,670.85 1648.7,670.07 1649.3,669.58 1649.9,670.34 1650.5,669.69 1651.1,670.71 1651.7,670.76 1652.3,670.98 1652.9,670.60 1653.5,669.87 1654.1,671.22 1654.7,671.46 1655.3,670.64 1655.9,670.30 1656.5,670.72 1657.1,670.59 1657.7,668.60 1658.3,669.43 1658.9,670.53 1659.5,670.85 1660.1,670.03 1660.7,670.74 1661.3,670.61 1661.9,670.73 1662.5,670.35 1663.1,671.60 1663.7,670.56 1664.3,670.39 1664.9,669.98 1665.5,670.44 1666.1,670.10 1666.7,670.30 1667.3,670.50 1667.9,671.16 1668.5,671.86 1669.1,671.81 1669.7,672.18 1670.3,671.05 1670.9,670.85 1671.5,670.06 1672.1,671.37 1672.7,670.14 1673.3,669.81 1673.9,669.00 1674.5,670.30 1675.1,671.73 1675.7,672.02 1676.3,671.87 1676.9,670.91 1677.5,671.30 1678.1,671.27 1678.7,671.94 1679.3,670.78 1679.9,671.54 1680.5,671.04 1681.1,672.21 1681.7,672.39 1682.3,671.89 1682.9,671.60 1683.5,670.93 1684.1,670.75 1684.7,670.14 1685.3,669.61 1685.9,670.39 1686.5,669.60 1687.1,669.35 1687.7,668.96 1688.3,670.87 1688.9,671.52 1689.5,672.16 1690.1,671.46 1690.7,671.25 1691.3,669.77 1691.9,669.92 1692.5,671.13 1693.1,672.03 1693.7,671.40 1694.3,670.81 1694.9,670.05 1695.5,670.02 1696.1,670.32 1696.7,671.28 1697.3,672.41 1697.9,671.96 1698.5,671.70 1699.1,671.29 1699.7,671.01 1700.3,671.65 1700.9,670.89 1701.5,670.07 1702.1,669.07 1702.7,670.25 1703.3,670.97 1703.9,670.21 1704.5,671.25 1705.1,671.05 1705.7,672.18 1706.3,670.99 1706.9,671.68 1707.5,671.70 1708.1,670.57 1708.7,670.66 1709.3,670.23 1709.9,670.96 1710.5,671.08 1711.1,671.40 1711.7,670.54 1712.3,669.82 1712.9,670.34 1713.5,671.66 1714.1,671.29 1714.7,670.98 1715.3,670.75 1715.9,671.99 1716.5,672.16 1717.1,672.08 1717.7,671.34 1718.3,671.36 1718.9,671.66 1719.5,671.72 1720.1,671.30 1720.7,671.80 1721.3,671.84 1721.9,671.55 1722.5,670.96 1723.1,670.30 1723.7,670.12 1724.3,670.22 1724.9,670.86 1725.5,671.83 1726.1,671.73 1726.7,671.29 1727.3,671.11 1727.9,670.48 1728.5,670.97 1729.1,670.81 1729.7,670.94 1730.3,670.11 1730.9,670.11 1731.5,670.14 1732.1,671.08 1732.7,670.34 1733.3,670.41 1733.9,670.00 1734.5,670.30 1735.1,670.04 1735.7,669.99 1736.3,669.48 1736.9,669.31 1737.5,669.18 1738.1,670.13 1738.7,670.32 1739.3,671.29 1739.9,671.35 1740.5,671.58 1741.1,670.94 1741.7,669.86 1742.3,669.88 1742.9,670.42 1743.5,670.63 1744.1,671.13 1744.7,670.79 1745.3,671.47 1745.9,670.55" fill="none" stroke="#4b4bff" stroke-width="1.25" stroke-linejoin="round"/>
<rect x="1135" y="686.3" width="611" height="1.6" fill="#505050"/>
<rect x="1146.2" y="651" width="2" height="139" fill="#6a6a6a"/>
<rect x="1134.20" y="650.20" width="612.00" height="140.60" fill="none" stroke="#000000" stroke-width="2.4"/>
<text x="1129.80" y="795.30" font-family="Liberation Serif" font-size="12" fill="#555" text-anchor="end" textLength="7.25" lengthAdjust="spacingAndGlyphs">0</text>
<text x="1129.80" y="760.55" font-family="Liberation Serif" font-size="12" fill="#555" text-anchor="end" textLength="29.00" lengthAdjust="spacingAndGlyphs">2500</text>
<text x="1129.80" y="725.80" font-family="Liberation Serif" font-size="12" fill="#555" text-anchor="end" textLength="29.00" lengthAdjust="spacingAndGlyphs">5000</text>
<text x="1129.80" y="691.05" font-family="Liberation Serif" font-size="12" fill="#555" text-anchor="end" textLength="29.00" lengthAdjust="spacingAndGlyphs">7500</text>
<text x="1129.80" y="656.30" font-family="Liberation Serif" font-size="12" fill="#555" text-anchor="end" textLength="36.25" lengthAdjust="spacingAndGlyphs">10000</text>
<text x="1131.17" y="807.00" font-family="Liberation Serif" font-size="12" fill="#555" textLength="7.25" lengthAdjust="spacingAndGlyphs">0</text>
<text x="1183.92" y="807.00" font-family="Liberation Serif" font-size="12" fill="#555" textLength="21.75" lengthAdjust="spacingAndGlyphs">100</text>
<text x="1243.92" y="807.00" font-family="Liberation Serif" font-size="12" fill="#555" textLength="21.75" lengthAdjust="spacingAndGlyphs">200</text>
<text x="1303.92" y="807.00" font-family="Liberation Serif" font-size="12" fill="#555" textLength="21.75" lengthAdjust="spacingAndGlyphs">300</text>
<text x="1363.92" y="807.00" font-family="Liberation Serif" font-size="12" fill="#555" textLength="21.75" lengthAdjust="spacingAndGlyphs">400</text>
<text x="1423.92" y="807.00" font-family="Liberation Serif" font-size="12" fill="#555" textLength="21.75" lengthAdjust="spacingAndGlyphs">500</text>
<text x="1483.92" y="807.00" font-family="Liberation Serif" font-size="12" fill="#555" textLength="21.75" lengthAdjust="spacingAndGlyphs">600</text>
<text x="1543.92" y="807.00" font-family="Liberation Serif" font-size="12" fill="#555" textLength="21.75" lengthAdjust="spacingAndGlyphs">700</text>
<text x="1603.92" y="807.00" font-family="Liberation Serif" font-size="12" fill="#555" textLength="21.75" lengthAdjust="spacingAndGlyphs">800</text>
<text x="1663.92" y="807.00" font-family="Liberation Serif" font-size="12" fill="#555" textLength="21.75" lengthAdjust="spacingAndGlyphs">900</text>
<text x="1720.30" y="807.00" font-family="Liberation Serif" font-size="12" fill="#555" textLength="29.00" lengthAdjust="spacingAndGlyphs">1000</text>
<rect x="1640.40" y="660.90" width="14.2" height="10.2" fill="#fff" fill-opacity="0.6" stroke="#cccccc" stroke-width="1"/>
<rect x="1641.90" y="662.40" width="11.2" height="7.6" fill="#0000ee"/>
<text x="1659.30" y="670.60" font-family="Liberation Serif" font-size="12" fill="#000000" textLength="79" lengthAdjust="spacingAndGlyphs">aida08 1.8.W</text>
<path d="M1745.40 640.00 L1756.40 651.00 L1745.40 662.00 L1734.40 651.00 Z" fill="#00ee00"/>
<rect x="7.60" y="1009.70" width="109.60" height="18.10" rx="3" fill="#e9e9ed" stroke="#8f8f9d" stroke-width="1"/>
<text x="12.00" y="1023.00" font-family="Liberation Sans" font-size="13" fill="#15141a" textLength="101.30" lengthAdjust="spacingAndGlyphs">Empty Log Window</text>
<rect x="123.90" y="1009.70" width="146.00" height="18.10" rx="3" fill="#e9e9ed" stroke="#8f8f9d" stroke-width="1"/>
<text x="127.80" y="1023.00" font-family="Liberation Sans" font-size="13" fill="#15141a" textLength="137.70" lengthAdjust="spacingAndGlyphs">Send Log Window to ELog</text>
<rect x="275.70" y="1009.70" width="43.30" height="18.10" rx="3" fill="#e9e9ed" stroke="#8f8f9d" stroke-width="1"/>
<text x="279.60" y="1023.00" font-family="Liberation Sans" font-size="13" fill="#15141a" textLength="34.90" lengthAdjust="spacingAndGlyphs">Reload</text>
<rect x="324.40" y="1009.70" width="37.80" height="18.10" rx="3" fill="#e9e9ed" stroke="#8f8f9d" stroke-width="1"/>
<text x="328.30" y="1023.00" font-family="Liberation Sans" font-size="13" fill="#15141a" textLength="30.20" lengthAdjust="spacingAndGlyphs">Reset</text>
<rect x="367.90" y="1009.70" width="87.20" height="18.10" rx="3" fill="#e9e9ed" stroke="#8f8f9d" stroke-width="1"/>
<text x="372.20" y="1023.00" font-family="Liberation Sans" font-size="13" fill="#15141a" textLength="79.00" lengthAdjust="spacingAndGlyphs">Show Variables</text>
<rect x="461.70" y="1009.70" width="105.20" height="18.10" rx="3" fill="#e9e9ed" stroke="#8f8f9d" stroke-width="1"/>
<text x="465.30" y="1023.00" font-family="Liberation Sans" font-size="13" fill="#15141a" textLength="98.10" lengthAdjust="spacingAndGlyphs">Show Log Window</text>
<rect x="573.80" y="1009.70" width="86.10" height="18.10" rx="3" fill="#e9e9ed" stroke="#8f8f9d" stroke-width="1"/>
<text x="577.50" y="1023.00" font-family="Liberation Sans" font-size="13" fill="#15141a" textLength="78.80" lengthAdjust="spacingAndGlyphs">Enable Logging</text>
<rect x="1781.80" y="1010.00" width="118.50" height="18.20" rx="3" fill="#e9e9ed" stroke="#8f8f9d" stroke-width="1"/>
<text x="1785.80" y="1023.20" font-family="Liberation Sans" font-size="13" fill="#15141a" textLength="110.00" lengthAdjust="spacingAndGlyphs">How to use this page</text>
<text x="1620.80" y="1057.00" font-family="Liberation Serif" font-size="16.3" fill="#ff0000" textLength="279.20" lengthAdjust="spacingAndGlyphs">Last Updated: April 11, 2024 14:05:15</text>
<rect x="7.00" y="1076.00" width="1894.00" height="2.00" fill="#53575c"/>
</svg>
</body></html>
